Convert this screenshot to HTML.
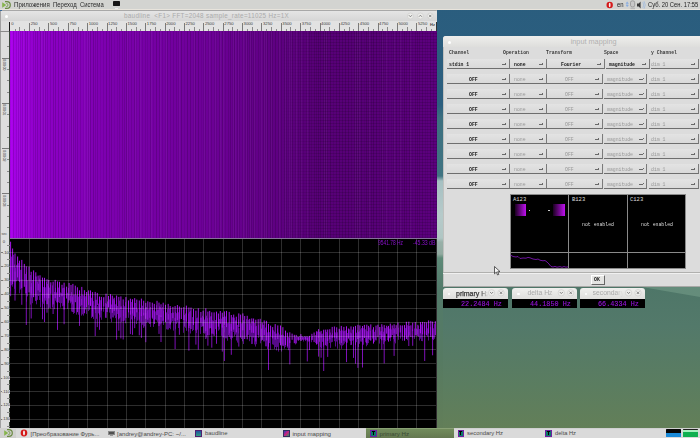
<!DOCTYPE html><html><head><meta charset="utf-8"><style>
*{margin:0;padding:0;box-sizing:border-box}
html,body{width:700px;height:438px;overflow:hidden;background:#2a5a7e;font-family:"Liberation Sans",sans-serif}
.a{position:absolute}
.t{position:absolute;white-space:nowrap;line-height:1}
.mono{font-family:"Liberation Mono",monospace}
</style></head><body><div class="a" style="left:0;top:0;width:700px;height:438px;background:linear-gradient(180deg,#2a5d7e 0px,#2c5f7f 105px,#3c7080 118px,#407482 176px,#a6c0c2 181px,#b6caca 215px,#b0c6c4 238px,#98b0a8 242px,#92aaa0 254px,#5e8a78 258px,#527a6a 290px,#567a62 360px,#627e58 428px)"></div>
<div class="a" style="left:443px;top:286px;width:257px;height:142px;background:linear-gradient(180deg,#4e7668 0px,#53796a 40px,#5b7d60 100px,#637f58 142px)"></div>
<svg class="a" style="left:0;top:0" width="700" height="438"><polygon points="636,286 700,286 700,297" fill="#68907f" fill-opacity="0.85"/></svg>
<div class="a" style="left:0;top:0;width:700px;height:9.6px;background:#d3d4d1;border-bottom:0.8px solid #e8e4dc"></div>
<svg class="a" style="left:0;top:0" width="12" height="10" viewBox="0 0 12 10"><path d="M5 1.6 H6.8 A3.5 3.4 0 0 1 6.8 8.4 H5" fill="none" stroke="#6a8a42" stroke-width="1.2"/><path d="M6.2 3.3 A1.8 1.7 0 0 1 6.2 6.7" fill="none" stroke="#7a9a52" stroke-width="0.9"/><path d="M2.2 2.3 L6.3 5 L2.2 7.7 Z" fill="#86b44c"/></svg>
<div class="t" style="left:13.6px;top:1.3px;font-size:7px;color:#2a2a2a;transform:scaleX(0.872);transform-origin:0 0">Приложения</div>
<div class="t" style="left:52.6px;top:1.3px;font-size:7px;color:#2a2a2a;transform:scaleX(0.849);transform-origin:0 0">Переход</div>
<div class="t" style="left:80.3px;top:1.3px;font-size:7px;color:#2a2a2a;transform:scaleX(0.84);transform-origin:0 0">Система</div>
<div class="a" style="left:112.9px;top:1.1px;width:7.2px;height:4.8px;background:#161616;border-radius:0.4px"></div><div class="a" style="left:115px;top:7.6px;width:3px;height:1.2px;background:#ececec"></div>
<svg class="a" style="left:0;top:0" width="700" height="12"><ellipse cx="609.7" cy="5" rx="3.2" ry="3.3" fill="#d41a1a"/><ellipse cx="609.7" cy="5" rx="0.9" ry="2.3" fill="#f4eaea"/></svg>
<div class="t" style="left:617px;top:1.3px;font-size:7px;color:#222;transform:scaleX(0.85);transform-origin:0 0">en</div>
<svg class="a" style="left:0;top:0" width="700" height="12"><path d="M627.2 1.8 L628.4 3.6 L626 3.6 Z M627.2 6.8 L628.4 5 L626 5 Z M627 3.4 V5.2" fill="#8aaee0" stroke="#8aaee0" stroke-width="0.5"/><rect x="630.5" y="0.8" width="4.2" height="6.2" rx="1.8" fill="#c8c8c8" stroke="#8a8a8a" stroke-width="0.7"/><rect x="630.4" y="7.6" width="4.6" height="1.6" fill="#b8b8b8"/><path d="M637 3.5 H638.8 L640.6 1.6 V8.4 L638.8 6.5 H637 Z" fill="#3a3a3a"/><path d="M642.8 2.2 Q644.8 5 642.8 7.8 M644 1.2 Q646.6 5 644 8.8" fill="none" stroke="#9ab8e0" stroke-width="0.7"/></svg>
<div class="t" style="left:648px;top:1.3px;font-size:7px;color:#222;transform:scaleX(0.831);transform-origin:0 0">Суб. 20 Сен. 17:55</div>
<div class="a" style="left:0;top:10px;width:437px;height:418px;background:#d8d8d6"></div>
<div class="a" style="left:0;top:10px;width:437px;height:11px;background:linear-gradient(#e6e6e6,#d6d6d6);border-top-right-radius:2px"></div>
<div class="a" style="left:0;top:9.6px;width:436.5px;height:0.8px;background:#a8a8a8;border-top-right-radius:1px"></div>
<div class="a" style="left:0;top:10px;width:1px;height:418px;background:#a4a4a4"></div>
<div class="a" style="left:0;top:9.5px;width:1.5px;height:1.5px;background:#3a6a9a"></div>
<div class="a" style="left:5px;top:15px;width:3px;height:3px;border-radius:50%;background:#fff"></div>
<div class="t" style="left:124px;top:12.6px;font-size:6.3px;letter-spacing:0.3px;color:#ababab">baudline &nbsp;&lt;F1&gt; FFT=2048 sample_rate=11025 Hz=1X</div>
<svg class="a" style="left:0;top:0" width="700" height="438"><circle cx="410.4" cy="16" r="3" fill="#ececea" stroke="#cfcfcd" stroke-width="0.7"/><path d="M408.9 15.2L410.4 16.8L411.9 15.2" stroke="#707070" stroke-width="0.8" fill="none"/><circle cx="420.4" cy="16" r="3" fill="#ececea" stroke="#cfcfcd" stroke-width="0.7"/><path d="M418.9 16.8L420.4 15.2L421.9 16.8" stroke="#707070" stroke-width="0.8" fill="none"/><circle cx="430.2" cy="16" r="3" fill="#ececea" stroke="#cfcfcd" stroke-width="0.7"/><path d="M429.0 14.8L431.4 17.2M431.4 14.8L429.0 17.2" stroke="#707070" stroke-width="0.8" fill="none"/></svg>
<div class="a" style="left:9px;top:21px;width:428px;height:10px;background:#e2e2e2"></div>
<div class="a" style="left:9px;top:21px;width:1px;height:10px;background:#111"></div>
<div class="a" style="left:436px;top:22px;width:1px;height:9px;background:#333"></div>
<div class="t" style="left:11.3px;top:22.3px;font-size:4.2px;color:#404040">0</div>
<div class="a" style="left:14.5px;top:28.6px;width:0.8px;height:2px;background:#8a8a8a"></div>
<div class="a" style="left:19.4px;top:27.1px;width:0.8px;height:3.5px;background:#8a8a8a"></div>
<div class="a" style="left:24.2px;top:28.6px;width:0.8px;height:2px;background:#8a8a8a"></div>
<div class="a" style="left:29.1px;top:22.8px;width:0.9px;height:8px;background:#7a7a7a"></div>
<div class="t" style="left:30.7px;top:22.3px;font-size:4.2px;color:#404040">250</div>
<div class="a" style="left:33.9px;top:28.6px;width:0.8px;height:2px;background:#8a8a8a"></div>
<div class="a" style="left:38.7px;top:27.1px;width:0.8px;height:3.5px;background:#8a8a8a"></div>
<div class="a" style="left:43.6px;top:28.6px;width:0.8px;height:2px;background:#8a8a8a"></div>
<div class="a" style="left:48.4px;top:22.8px;width:0.9px;height:8px;background:#7a7a7a"></div>
<div class="t" style="left:50.0px;top:22.3px;font-size:4.2px;color:#404040">500</div>
<div class="a" style="left:53.3px;top:28.6px;width:0.8px;height:2px;background:#8a8a8a"></div>
<div class="a" style="left:58.1px;top:27.1px;width:0.8px;height:3.5px;background:#8a8a8a"></div>
<div class="a" style="left:62.9px;top:28.6px;width:0.8px;height:2px;background:#8a8a8a"></div>
<div class="a" style="left:67.8px;top:22.8px;width:0.9px;height:8px;background:#7a7a7a"></div>
<div class="t" style="left:69.4px;top:22.3px;font-size:4.2px;color:#404040">750</div>
<div class="a" style="left:72.6px;top:28.6px;width:0.8px;height:2px;background:#8a8a8a"></div>
<div class="a" style="left:77.5px;top:27.1px;width:0.8px;height:3.5px;background:#8a8a8a"></div>
<div class="a" style="left:82.3px;top:28.6px;width:0.8px;height:2px;background:#8a8a8a"></div>
<div class="a" style="left:87.1px;top:22.8px;width:0.9px;height:8px;background:#7a7a7a"></div>
<div class="t" style="left:88.7px;top:22.3px;font-size:4.2px;color:#404040">1000</div>
<div class="a" style="left:92.0px;top:28.6px;width:0.8px;height:2px;background:#8a8a8a"></div>
<div class="a" style="left:96.8px;top:27.1px;width:0.8px;height:3.5px;background:#8a8a8a"></div>
<div class="a" style="left:101.7px;top:28.6px;width:0.8px;height:2px;background:#8a8a8a"></div>
<div class="a" style="left:106.5px;top:22.8px;width:0.9px;height:8px;background:#7a7a7a"></div>
<div class="t" style="left:108.1px;top:22.3px;font-size:4.2px;color:#404040">1250</div>
<div class="a" style="left:111.3px;top:28.6px;width:0.8px;height:2px;background:#8a8a8a"></div>
<div class="a" style="left:116.2px;top:27.1px;width:0.8px;height:3.5px;background:#8a8a8a"></div>
<div class="a" style="left:121.0px;top:28.6px;width:0.8px;height:2px;background:#8a8a8a"></div>
<div class="a" style="left:125.9px;top:22.8px;width:0.9px;height:8px;background:#7a7a7a"></div>
<div class="t" style="left:127.5px;top:22.3px;font-size:4.2px;color:#404040">1500</div>
<div class="a" style="left:130.7px;top:28.6px;width:0.8px;height:2px;background:#8a8a8a"></div>
<div class="a" style="left:135.5px;top:27.1px;width:0.8px;height:3.5px;background:#8a8a8a"></div>
<div class="a" style="left:140.4px;top:28.6px;width:0.8px;height:2px;background:#8a8a8a"></div>
<div class="a" style="left:145.2px;top:22.8px;width:0.9px;height:8px;background:#7a7a7a"></div>
<div class="t" style="left:146.8px;top:22.3px;font-size:4.2px;color:#404040">1750</div>
<div class="a" style="left:150.1px;top:28.6px;width:0.8px;height:2px;background:#8a8a8a"></div>
<div class="a" style="left:154.9px;top:27.1px;width:0.8px;height:3.5px;background:#8a8a8a"></div>
<div class="a" style="left:159.7px;top:28.6px;width:0.8px;height:2px;background:#8a8a8a"></div>
<div class="a" style="left:164.6px;top:22.8px;width:0.9px;height:8px;background:#7a7a7a"></div>
<div class="t" style="left:166.2px;top:22.3px;font-size:4.2px;color:#404040">2000</div>
<div class="a" style="left:169.4px;top:28.6px;width:0.8px;height:2px;background:#8a8a8a"></div>
<div class="a" style="left:174.3px;top:27.1px;width:0.8px;height:3.5px;background:#8a8a8a"></div>
<div class="a" style="left:179.1px;top:28.6px;width:0.8px;height:2px;background:#8a8a8a"></div>
<div class="a" style="left:183.9px;top:22.8px;width:0.9px;height:8px;background:#7a7a7a"></div>
<div class="t" style="left:185.5px;top:22.3px;font-size:4.2px;color:#404040">2250</div>
<div class="a" style="left:188.8px;top:28.6px;width:0.8px;height:2px;background:#8a8a8a"></div>
<div class="a" style="left:193.6px;top:27.1px;width:0.8px;height:3.5px;background:#8a8a8a"></div>
<div class="a" style="left:198.5px;top:28.6px;width:0.8px;height:2px;background:#8a8a8a"></div>
<div class="a" style="left:203.3px;top:22.8px;width:0.9px;height:8px;background:#7a7a7a"></div>
<div class="t" style="left:204.9px;top:22.3px;font-size:4.2px;color:#404040">2500</div>
<div class="a" style="left:208.1px;top:28.6px;width:0.8px;height:2px;background:#8a8a8a"></div>
<div class="a" style="left:213.0px;top:27.1px;width:0.8px;height:3.5px;background:#8a8a8a"></div>
<div class="a" style="left:217.8px;top:28.6px;width:0.8px;height:2px;background:#8a8a8a"></div>
<div class="a" style="left:222.7px;top:22.8px;width:0.9px;height:8px;background:#7a7a7a"></div>
<div class="t" style="left:224.3px;top:22.3px;font-size:4.2px;color:#404040">2750</div>
<div class="a" style="left:227.5px;top:28.6px;width:0.8px;height:2px;background:#8a8a8a"></div>
<div class="a" style="left:232.3px;top:27.1px;width:0.8px;height:3.5px;background:#8a8a8a"></div>
<div class="a" style="left:237.2px;top:28.6px;width:0.8px;height:2px;background:#8a8a8a"></div>
<div class="a" style="left:242.0px;top:22.8px;width:0.9px;height:8px;background:#7a7a7a"></div>
<div class="t" style="left:243.6px;top:22.3px;font-size:4.2px;color:#404040">3000</div>
<div class="a" style="left:246.9px;top:28.6px;width:0.8px;height:2px;background:#8a8a8a"></div>
<div class="a" style="left:251.7px;top:27.1px;width:0.8px;height:3.5px;background:#8a8a8a"></div>
<div class="a" style="left:256.5px;top:28.6px;width:0.8px;height:2px;background:#8a8a8a"></div>
<div class="a" style="left:261.4px;top:22.8px;width:0.9px;height:8px;background:#7a7a7a"></div>
<div class="t" style="left:263.0px;top:22.3px;font-size:4.2px;color:#404040">3250</div>
<div class="a" style="left:266.2px;top:28.6px;width:0.8px;height:2px;background:#8a8a8a"></div>
<div class="a" style="left:271.1px;top:27.1px;width:0.8px;height:3.5px;background:#8a8a8a"></div>
<div class="a" style="left:275.9px;top:28.6px;width:0.8px;height:2px;background:#8a8a8a"></div>
<div class="a" style="left:280.7px;top:22.8px;width:0.9px;height:8px;background:#7a7a7a"></div>
<div class="t" style="left:282.3px;top:22.3px;font-size:4.2px;color:#404040">3500</div>
<div class="a" style="left:285.6px;top:28.6px;width:0.8px;height:2px;background:#8a8a8a"></div>
<div class="a" style="left:290.4px;top:27.1px;width:0.8px;height:3.5px;background:#8a8a8a"></div>
<div class="a" style="left:295.3px;top:28.6px;width:0.8px;height:2px;background:#8a8a8a"></div>
<div class="a" style="left:300.1px;top:22.8px;width:0.9px;height:8px;background:#7a7a7a"></div>
<div class="t" style="left:301.7px;top:22.3px;font-size:4.2px;color:#404040">3750</div>
<div class="a" style="left:304.9px;top:28.6px;width:0.8px;height:2px;background:#8a8a8a"></div>
<div class="a" style="left:309.8px;top:27.1px;width:0.8px;height:3.5px;background:#8a8a8a"></div>
<div class="a" style="left:314.6px;top:28.6px;width:0.8px;height:2px;background:#8a8a8a"></div>
<div class="a" style="left:319.5px;top:22.8px;width:0.9px;height:8px;background:#7a7a7a"></div>
<div class="t" style="left:321.1px;top:22.3px;font-size:4.2px;color:#404040">4000</div>
<div class="a" style="left:324.3px;top:28.6px;width:0.8px;height:2px;background:#8a8a8a"></div>
<div class="a" style="left:329.1px;top:27.1px;width:0.8px;height:3.5px;background:#8a8a8a"></div>
<div class="a" style="left:334.0px;top:28.6px;width:0.8px;height:2px;background:#8a8a8a"></div>
<div class="a" style="left:338.8px;top:22.8px;width:0.9px;height:8px;background:#7a7a7a"></div>
<div class="t" style="left:340.4px;top:22.3px;font-size:4.2px;color:#404040">4250</div>
<div class="a" style="left:343.7px;top:28.6px;width:0.8px;height:2px;background:#8a8a8a"></div>
<div class="a" style="left:348.5px;top:27.1px;width:0.8px;height:3.5px;background:#8a8a8a"></div>
<div class="a" style="left:353.3px;top:28.6px;width:0.8px;height:2px;background:#8a8a8a"></div>
<div class="a" style="left:358.2px;top:22.8px;width:0.9px;height:8px;background:#7a7a7a"></div>
<div class="t" style="left:359.8px;top:22.3px;font-size:4.2px;color:#404040">4500</div>
<div class="a" style="left:363.0px;top:28.6px;width:0.8px;height:2px;background:#8a8a8a"></div>
<div class="a" style="left:367.9px;top:27.1px;width:0.8px;height:3.5px;background:#8a8a8a"></div>
<div class="a" style="left:372.7px;top:28.6px;width:0.8px;height:2px;background:#8a8a8a"></div>
<div class="a" style="left:377.5px;top:22.8px;width:0.9px;height:8px;background:#7a7a7a"></div>
<div class="t" style="left:379.1px;top:22.3px;font-size:4.2px;color:#404040">4750</div>
<div class="a" style="left:382.4px;top:28.6px;width:0.8px;height:2px;background:#8a8a8a"></div>
<div class="a" style="left:387.2px;top:27.1px;width:0.8px;height:3.5px;background:#8a8a8a"></div>
<div class="a" style="left:392.1px;top:28.6px;width:0.8px;height:2px;background:#8a8a8a"></div>
<div class="a" style="left:396.9px;top:22.8px;width:0.9px;height:8px;background:#7a7a7a"></div>
<div class="t" style="left:398.5px;top:22.3px;font-size:4.2px;color:#404040">5000</div>
<div class="a" style="left:401.7px;top:28.6px;width:0.8px;height:2px;background:#8a8a8a"></div>
<div class="a" style="left:406.6px;top:27.1px;width:0.8px;height:3.5px;background:#8a8a8a"></div>
<div class="a" style="left:411.4px;top:28.6px;width:0.8px;height:2px;background:#8a8a8a"></div>
<div class="a" style="left:416.3px;top:22.8px;width:0.9px;height:8px;background:#7a7a7a"></div>
<div class="t" style="left:417.9px;top:22.3px;font-size:4.2px;color:#404040">5250</div>
<div class="a" style="left:421.1px;top:28.6px;width:0.8px;height:2px;background:#8a8a8a"></div>
<div class="a" style="left:425.9px;top:27.1px;width:0.8px;height:3.5px;background:#8a8a8a"></div>
<div class="a" style="left:430.8px;top:28.6px;width:0.8px;height:2px;background:#8a8a8a"></div>
<div class="t" style="left:430px;top:23px;font-size:4px;font-weight:bold;color:#3c3c3c">Hz</div>
<div class="a" style="left:0;top:21px;width:9.5px;height:407px;background:#dedede;border-left:1px solid #a0a0a0"></div>
<div class="a" style="left:0;top:30.5px;width:10px;height:0.8px;background:#8a8a8a"></div>
<div class="a" style="left:9px;top:21.5px;width:1px;height:9.5px;background:#181818"></div>
<div class="a" style="left:6.5px;top:46.4px;width:3px;height:0.8px;background:#8a8a8a"></div>
<div class="a" style="left:1.5px;top:57.7px;width:8px;height:0.8px;background:#7a7a7a"></div>
<div class="t" style="left:1.6px;top:59.2px;font-size:4px;color:#3a3a3a;writing-mode:vertical-rl;letter-spacing:-0.3px">0:00:00</div>
<div class="a" style="left:6.5px;top:69.0px;width:3px;height:0.8px;background:#8a8a8a"></div>
<div class="a" style="left:6.5px;top:80.3px;width:3px;height:0.8px;background:#8a8a8a"></div>
<div class="a" style="left:6.5px;top:91.6px;width:3px;height:0.8px;background:#8a8a8a"></div>
<div class="a" style="left:1.5px;top:102.9px;width:8px;height:0.8px;background:#7a7a7a"></div>
<div class="t" style="left:1.6px;top:104.4px;font-size:4px;color:#3a3a3a;writing-mode:vertical-rl;letter-spacing:-0.3px">0:00:01</div>
<div class="a" style="left:6.5px;top:114.2px;width:3px;height:0.8px;background:#8a8a8a"></div>
<div class="a" style="left:6.5px;top:125.5px;width:3px;height:0.8px;background:#8a8a8a"></div>
<div class="a" style="left:6.5px;top:136.8px;width:3px;height:0.8px;background:#8a8a8a"></div>
<div class="a" style="left:1.5px;top:148.1px;width:8px;height:0.8px;background:#7a7a7a"></div>
<div class="t" style="left:1.6px;top:149.6px;font-size:4px;color:#3a3a3a;writing-mode:vertical-rl;letter-spacing:-0.3px">0:00:02</div>
<div class="a" style="left:6.5px;top:159.4px;width:3px;height:0.8px;background:#8a8a8a"></div>
<div class="a" style="left:6.5px;top:170.7px;width:3px;height:0.8px;background:#8a8a8a"></div>
<div class="a" style="left:6.5px;top:182.0px;width:3px;height:0.8px;background:#8a8a8a"></div>
<div class="a" style="left:1.5px;top:193.3px;width:8px;height:0.8px;background:#7a7a7a"></div>
<div class="t" style="left:1.6px;top:194.8px;font-size:4px;color:#3a3a3a;writing-mode:vertical-rl;letter-spacing:-0.3px">0:00:03</div>
<div class="a" style="left:6.5px;top:204.6px;width:3px;height:0.8px;background:#8a8a8a"></div>
<div class="a" style="left:6.5px;top:215.9px;width:3px;height:0.8px;background:#8a8a8a"></div>
<div class="a" style="left:6.5px;top:227.2px;width:3px;height:0.8px;background:#8a8a8a"></div>
<div class="t" style="left:1.5px;top:232.5px;font-size:3.5px;color:#444">sec</div>
<div class="a" style="left:10px;top:31px;width:427px;height:207px;background:linear-gradient(90deg,#b004f2 0px,#a000e0 6px,#8e00c8 30px,#7c00ae 100px,#6c0096 200px,#580078 300px,#570077 350px,#5c007e 427px)"></div>
<svg class="a" style="left:10px;top:31px" width="427" height="207"><rect x="0.0" y="0" width="1" height="207" fill="#000" fill-opacity="0.08"/><rect x="3.0" y="0" width="1" height="207" fill="#000" fill-opacity="0.15"/><rect x="6.0" y="0" width="1" height="207" fill="#000" fill-opacity="0.07"/><rect x="7.0" y="0" width="1" height="207" fill="#fff" fill-opacity="0.04"/><rect x="8.0" y="0" width="1" height="207" fill="#000" fill-opacity="0.09"/><rect x="9.0" y="0" width="1" height="207" fill="#fff" fill-opacity="0.04"/><rect x="10.0" y="0" width="1" height="207" fill="#000" fill-opacity="0.11"/><rect x="12.0" y="0" width="1" height="207" fill="#000" fill-opacity="0.12"/><rect x="13.0" y="0" width="1" height="207" fill="#fff" fill-opacity="0.04"/><rect x="15.0" y="0" width="1" height="207" fill="#000" fill-opacity="0.15"/><rect x="17.0" y="0" width="1" height="207" fill="#000" fill-opacity="0.13"/><rect x="18.0" y="0" width="1" height="207" fill="#fff" fill-opacity="0.04"/><rect x="20.0" y="0" width="1" height="207" fill="#000" fill-opacity="0.06"/><rect x="23.0" y="0" width="1" height="207" fill="#000" fill-opacity="0.11"/><rect x="25.0" y="0" width="1" height="207" fill="#000" fill-opacity="0.13"/><rect x="27.0" y="0" width="1" height="207" fill="#000" fill-opacity="0.13"/><rect x="30.0" y="0" width="1" height="207" fill="#000" fill-opacity="0.15"/><rect x="31.0" y="0" width="1" height="207" fill="#fff" fill-opacity="0.04"/><rect x="33.0" y="0" width="1" height="207" fill="#000" fill-opacity="0.11"/><rect x="34.0" y="0" width="1" height="207" fill="#fff" fill-opacity="0.04"/><rect x="35.0" y="0" width="1" height="207" fill="#000" fill-opacity="0.14"/><rect x="37.0" y="0" width="1" height="207" fill="#000" fill-opacity="0.11"/><rect x="40.0" y="0" width="1" height="207" fill="#000" fill-opacity="0.11"/><rect x="43.0" y="0" width="1" height="207" fill="#000" fill-opacity="0.15"/><rect x="45.0" y="0" width="1" height="207" fill="#000" fill-opacity="0.15"/><rect x="48.0" y="0" width="1" height="207" fill="#000" fill-opacity="0.13"/><rect x="51.0" y="0" width="1" height="207" fill="#000" fill-opacity="0.15"/><rect x="54.0" y="0" width="1" height="207" fill="#000" fill-opacity="0.12"/><rect x="57.0" y="0" width="1" height="207" fill="#000" fill-opacity="0.09"/><rect x="58.0" y="0" width="1" height="207" fill="#fff" fill-opacity="0.04"/><rect x="59.0" y="0" width="1" height="207" fill="#000" fill-opacity="0.07"/><rect x="61.0" y="0" width="1" height="207" fill="#000" fill-opacity="0.15"/><rect x="62.0" y="0" width="1" height="207" fill="#fff" fill-opacity="0.04"/><rect x="63.0" y="0" width="1" height="207" fill="#000" fill-opacity="0.14"/><rect x="65.0" y="0" width="1" height="207" fill="#000" fill-opacity="0.12"/><rect x="67.0" y="0" width="1" height="207" fill="#000" fill-opacity="0.13"/><rect x="70.0" y="0" width="1" height="207" fill="#000" fill-opacity="0.11"/><rect x="73.0" y="0" width="1" height="207" fill="#000" fill-opacity="0.06"/><rect x="74.0" y="0" width="1" height="207" fill="#fff" fill-opacity="0.04"/><rect x="76.0" y="0" width="1" height="207" fill="#000" fill-opacity="0.06"/><rect x="77.0" y="0" width="1" height="207" fill="#fff" fill-opacity="0.04"/><rect x="78.0" y="0" width="1" height="207" fill="#000" fill-opacity="0.09"/><rect x="79.0" y="0" width="1" height="207" fill="#fff" fill-opacity="0.04"/><rect x="80.0" y="0" width="1" height="207" fill="#000" fill-opacity="0.16"/><rect x="83.0" y="0" width="1" height="207" fill="#000" fill-opacity="0.16"/><rect x="85.0" y="0" width="1" height="207" fill="#000" fill-opacity="0.10"/><rect x="87.0" y="0" width="1" height="207" fill="#000" fill-opacity="0.12"/><rect x="90.0" y="0" width="1" height="207" fill="#000" fill-opacity="0.07"/><rect x="93.0" y="0" width="1" height="207" fill="#000" fill-opacity="0.09"/><rect x="96.0" y="0" width="1" height="207" fill="#000" fill-opacity="0.15"/><rect x="99.0" y="0" width="1" height="207" fill="#000" fill-opacity="0.11"/><rect x="101.0" y="0" width="1" height="207" fill="#000" fill-opacity="0.14"/><rect x="104.0" y="0" width="1" height="207" fill="#000" fill-opacity="0.06"/><rect x="107.0" y="0" width="1" height="207" fill="#000" fill-opacity="0.07"/><rect x="109.0" y="0" width="1" height="207" fill="#000" fill-opacity="0.10"/><rect x="112.0" y="0" width="1" height="207" fill="#000" fill-opacity="0.13"/><rect x="114.0" y="0" width="1" height="207" fill="#000" fill-opacity="0.12"/><rect x="116.0" y="0" width="1" height="207" fill="#000" fill-opacity="0.16"/><rect x="117.0" y="0" width="1" height="207" fill="#fff" fill-opacity="0.04"/><rect x="118.0" y="0" width="1" height="207" fill="#000" fill-opacity="0.09"/><rect x="121.0" y="0" width="1" height="207" fill="#000" fill-opacity="0.10"/><rect x="124.0" y="0" width="1" height="207" fill="#000" fill-opacity="0.14"/><rect x="125.0" y="0" width="1" height="207" fill="#fff" fill-opacity="0.04"/><rect x="126.0" y="0" width="1" height="207" fill="#000" fill-opacity="0.07"/><rect x="129.0" y="0" width="1" height="207" fill="#000" fill-opacity="0.13"/><rect x="130.0" y="0" width="1" height="207" fill="#fff" fill-opacity="0.04"/><rect x="132.0" y="0" width="1" height="207" fill="#000" fill-opacity="0.08"/><rect x="135.0" y="0" width="1" height="207" fill="#000" fill-opacity="0.09"/><rect x="137.0" y="0" width="1" height="207" fill="#000" fill-opacity="0.07"/><rect x="140.0" y="0" width="1" height="207" fill="#000" fill-opacity="0.13"/><rect x="141.0" y="0" width="1" height="207" fill="#fff" fill-opacity="0.04"/><rect x="143.0" y="0" width="1" height="207" fill="#000" fill-opacity="0.07"/><rect x="146.0" y="0" width="1" height="207" fill="#000" fill-opacity="0.15"/><rect x="149.0" y="0" width="1" height="207" fill="#000" fill-opacity="0.14"/><rect x="150.0" y="0" width="1" height="207" fill="#fff" fill-opacity="0.04"/><rect x="152.0" y="0" width="1" height="207" fill="#000" fill-opacity="0.09"/><rect x="155.0" y="0" width="1" height="207" fill="#000" fill-opacity="0.08"/><rect x="156.0" y="0" width="1" height="207" fill="#fff" fill-opacity="0.04"/><rect x="157.0" y="0" width="1" height="207" fill="#000" fill-opacity="0.14"/><rect x="160.0" y="0" width="1" height="207" fill="#000" fill-opacity="0.10"/><rect x="163.0" y="0" width="1" height="207" fill="#000" fill-opacity="0.11"/><rect x="166.0" y="0" width="1" height="207" fill="#000" fill-opacity="0.10"/><rect x="168.0" y="0" width="1" height="207" fill="#000" fill-opacity="0.08"/><rect x="169.0" y="0" width="1" height="207" fill="#fff" fill-opacity="0.04"/><rect x="171.0" y="0" width="1" height="207" fill="#000" fill-opacity="0.16"/><rect x="174.0" y="0" width="1" height="207" fill="#000" fill-opacity="0.06"/><rect x="177.0" y="0" width="1" height="207" fill="#000" fill-opacity="0.16"/><rect x="180.0" y="0" width="1" height="207" fill="#000" fill-opacity="0.15"/><rect x="183.0" y="0" width="1" height="207" fill="#000" fill-opacity="0.07"/><rect x="184.0" y="0" width="1" height="207" fill="#fff" fill-opacity="0.04"/><rect x="185.0" y="0" width="1" height="207" fill="#000" fill-opacity="0.15"/><rect x="188.0" y="0" width="1" height="207" fill="#000" fill-opacity="0.15"/><rect x="191.0" y="0" width="1" height="207" fill="#000" fill-opacity="0.06"/><rect x="193.0" y="0" width="1" height="207" fill="#000" fill-opacity="0.08"/><rect x="194.0" y="0" width="1" height="207" fill="#fff" fill-opacity="0.04"/><rect x="195.0" y="0" width="1" height="207" fill="#000" fill-opacity="0.11"/><rect x="198.0" y="0" width="1" height="207" fill="#000" fill-opacity="0.07"/><rect x="199.0" y="0" width="1" height="207" fill="#fff" fill-opacity="0.04"/><rect x="201.0" y="0" width="1" height="207" fill="#000" fill-opacity="0.11"/><rect x="204.0" y="0" width="1" height="207" fill="#000" fill-opacity="0.08"/><rect x="205.0" y="0" width="1" height="207" fill="#fff" fill-opacity="0.04"/><rect x="206.0" y="0" width="1" height="207" fill="#000" fill-opacity="0.08"/><rect x="209.0" y="0" width="1" height="207" fill="#000" fill-opacity="0.14"/><rect x="210.0" y="0" width="1" height="207" fill="#fff" fill-opacity="0.04"/><rect x="212.0" y="0" width="1" height="207" fill="#000" fill-opacity="0.15"/><rect x="213.0" y="0" width="1" height="207" fill="#fff" fill-opacity="0.04"/><rect x="215.0" y="0" width="1" height="207" fill="#000" fill-opacity="0.08"/><rect x="218.0" y="0" width="1" height="207" fill="#000" fill-opacity="0.10"/><rect x="220.0" y="0" width="1" height="207" fill="#000" fill-opacity="0.15"/><rect x="222.0" y="0" width="1" height="207" fill="#000" fill-opacity="0.07"/><rect x="223.0" y="0" width="1" height="207" fill="#fff" fill-opacity="0.04"/><rect x="224.0" y="0" width="1" height="207" fill="#000" fill-opacity="0.15"/><rect x="225.0" y="0" width="1" height="207" fill="#fff" fill-opacity="0.04"/><rect x="227.0" y="0" width="1" height="207" fill="#000" fill-opacity="0.11"/><rect x="228.0" y="0" width="1" height="207" fill="#fff" fill-opacity="0.04"/><rect x="229.0" y="0" width="1" height="207" fill="#000" fill-opacity="0.10"/><rect x="232.0" y="0" width="1" height="207" fill="#000" fill-opacity="0.09"/><rect x="233.0" y="0" width="1" height="207" fill="#fff" fill-opacity="0.04"/><rect x="235.0" y="0" width="1" height="207" fill="#000" fill-opacity="0.10"/><rect x="236.0" y="0" width="1" height="207" fill="#fff" fill-opacity="0.04"/><rect x="237.0" y="0" width="1" height="207" fill="#000" fill-opacity="0.13"/><rect x="239.0" y="0" width="1" height="207" fill="#000" fill-opacity="0.12"/><rect x="240.0" y="0" width="1" height="207" fill="#fff" fill-opacity="0.04"/><rect x="241.0" y="0" width="1" height="207" fill="#000" fill-opacity="0.12"/><rect x="243.0" y="0" width="1" height="207" fill="#000" fill-opacity="0.12"/><rect x="244.0" y="0" width="1" height="207" fill="#fff" fill-opacity="0.04"/><rect x="245.0" y="0" width="1" height="207" fill="#000" fill-opacity="0.07"/><rect x="248.0" y="0" width="1" height="207" fill="#000" fill-opacity="0.10"/><rect x="250.0" y="0" width="1" height="207" fill="#000" fill-opacity="0.06"/><rect x="251.0" y="0" width="1" height="207" fill="#fff" fill-opacity="0.04"/><rect x="253.0" y="0" width="1" height="207" fill="#000" fill-opacity="0.13"/><rect x="254.0" y="0" width="1" height="207" fill="#fff" fill-opacity="0.04"/><rect x="255.0" y="0" width="1" height="207" fill="#000" fill-opacity="0.08"/><rect x="256.0" y="0" width="1" height="207" fill="#fff" fill-opacity="0.04"/><rect x="257.0" y="0" width="1" height="207" fill="#000" fill-opacity="0.15"/><rect x="260.0" y="0" width="1" height="207" fill="#000" fill-opacity="0.14"/><rect x="261.0" y="0" width="1" height="207" fill="#fff" fill-opacity="0.04"/><rect x="262.0" y="0" width="1" height="207" fill="#000" fill-opacity="0.13"/><rect x="265.0" y="0" width="1" height="207" fill="#000" fill-opacity="0.14"/><rect x="268.0" y="0" width="1" height="207" fill="#000" fill-opacity="0.12"/><rect x="269.0" y="0" width="1" height="207" fill="#fff" fill-opacity="0.04"/><rect x="271.0" y="0" width="1" height="207" fill="#000" fill-opacity="0.13"/><rect x="274.0" y="0" width="1" height="207" fill="#000" fill-opacity="0.14"/><rect x="275.0" y="0" width="1" height="207" fill="#fff" fill-opacity="0.04"/><rect x="276.0" y="0" width="1" height="207" fill="#000" fill-opacity="0.12"/><rect x="278.0" y="0" width="1" height="207" fill="#000" fill-opacity="0.08"/><rect x="279.0" y="0" width="1" height="207" fill="#fff" fill-opacity="0.04"/><rect x="280.0" y="0" width="1" height="207" fill="#000" fill-opacity="0.06"/><rect x="281.0" y="0" width="1" height="207" fill="#fff" fill-opacity="0.04"/><rect x="282.0" y="0" width="1" height="207" fill="#000" fill-opacity="0.14"/><rect x="285.0" y="0" width="1" height="207" fill="#000" fill-opacity="0.09"/><rect x="286.0" y="0" width="1" height="207" fill="#fff" fill-opacity="0.04"/><rect x="288.0" y="0" width="1" height="207" fill="#000" fill-opacity="0.11"/><rect x="290.0" y="0" width="1" height="207" fill="#000" fill-opacity="0.12"/><rect x="291.0" y="0" width="1" height="207" fill="#fff" fill-opacity="0.04"/><rect x="293.0" y="0" width="1" height="207" fill="#000" fill-opacity="0.07"/><rect x="296.0" y="0" width="1" height="207" fill="#000" fill-opacity="0.08"/><rect x="297.0" y="0" width="1" height="207" fill="#fff" fill-opacity="0.04"/><rect x="299.0" y="0" width="1" height="207" fill="#000" fill-opacity="0.12"/><rect x="301.0" y="0" width="1" height="207" fill="#000" fill-opacity="0.09"/><rect x="304.0" y="0" width="1" height="207" fill="#000" fill-opacity="0.12"/><rect x="306.0" y="0" width="1" height="207" fill="#000" fill-opacity="0.11"/><rect x="308.0" y="0" width="1" height="207" fill="#000" fill-opacity="0.14"/><rect x="310.0" y="0" width="1" height="207" fill="#000" fill-opacity="0.13"/><rect x="313.0" y="0" width="1" height="207" fill="#000" fill-opacity="0.13"/><rect x="314.0" y="0" width="1" height="207" fill="#fff" fill-opacity="0.04"/><rect x="315.0" y="0" width="1" height="207" fill="#000" fill-opacity="0.15"/><rect x="316.0" y="0" width="1" height="207" fill="#fff" fill-opacity="0.04"/><rect x="317.0" y="0" width="1" height="207" fill="#000" fill-opacity="0.11"/><rect x="320.0" y="0" width="1" height="207" fill="#000" fill-opacity="0.16"/><rect x="323.0" y="0" width="1" height="207" fill="#000" fill-opacity="0.07"/><rect x="326.0" y="0" width="1" height="207" fill="#000" fill-opacity="0.12"/><rect x="329.0" y="0" width="1" height="207" fill="#000" fill-opacity="0.15"/><rect x="332.0" y="0" width="1" height="207" fill="#000" fill-opacity="0.13"/><rect x="335.0" y="0" width="1" height="207" fill="#000" fill-opacity="0.15"/><rect x="338.0" y="0" width="1" height="207" fill="#000" fill-opacity="0.15"/><rect x="341.0" y="0" width="1" height="207" fill="#000" fill-opacity="0.11"/><rect x="344.0" y="0" width="1" height="207" fill="#000" fill-opacity="0.12"/><rect x="345.0" y="0" width="1" height="207" fill="#fff" fill-opacity="0.04"/><rect x="346.0" y="0" width="1" height="207" fill="#000" fill-opacity="0.14"/><rect x="347.0" y="0" width="1" height="207" fill="#fff" fill-opacity="0.04"/><rect x="348.0" y="0" width="1" height="207" fill="#000" fill-opacity="0.13"/><rect x="349.0" y="0" width="1" height="207" fill="#fff" fill-opacity="0.04"/><rect x="351.0" y="0" width="1" height="207" fill="#000" fill-opacity="0.14"/><rect x="354.0" y="0" width="1" height="207" fill="#000" fill-opacity="0.06"/><rect x="356.0" y="0" width="1" height="207" fill="#000" fill-opacity="0.15"/><rect x="358.0" y="0" width="1" height="207" fill="#000" fill-opacity="0.11"/><rect x="359.0" y="0" width="1" height="207" fill="#fff" fill-opacity="0.04"/><rect x="361.0" y="0" width="1" height="207" fill="#000" fill-opacity="0.12"/><rect x="363.0" y="0" width="1" height="207" fill="#000" fill-opacity="0.16"/><rect x="366.0" y="0" width="1" height="207" fill="#000" fill-opacity="0.15"/><rect x="369.0" y="0" width="1" height="207" fill="#000" fill-opacity="0.08"/><rect x="371.0" y="0" width="1" height="207" fill="#000" fill-opacity="0.15"/><rect x="372.0" y="0" width="1" height="207" fill="#fff" fill-opacity="0.04"/><rect x="373.0" y="0" width="1" height="207" fill="#000" fill-opacity="0.09"/><rect x="375.0" y="0" width="1" height="207" fill="#000" fill-opacity="0.07"/><rect x="376.0" y="0" width="1" height="207" fill="#fff" fill-opacity="0.04"/><rect x="378.0" y="0" width="1" height="207" fill="#000" fill-opacity="0.06"/><rect x="381.0" y="0" width="1" height="207" fill="#000" fill-opacity="0.06"/><rect x="383.0" y="0" width="1" height="207" fill="#000" fill-opacity="0.10"/><rect x="384.0" y="0" width="1" height="207" fill="#fff" fill-opacity="0.04"/><rect x="386.0" y="0" width="1" height="207" fill="#000" fill-opacity="0.13"/><rect x="389.0" y="0" width="1" height="207" fill="#000" fill-opacity="0.11"/><rect x="390.0" y="0" width="1" height="207" fill="#fff" fill-opacity="0.04"/><rect x="392.0" y="0" width="1" height="207" fill="#000" fill-opacity="0.07"/><rect x="394.0" y="0" width="1" height="207" fill="#000" fill-opacity="0.15"/><rect x="396.0" y="0" width="1" height="207" fill="#000" fill-opacity="0.11"/><rect x="399.0" y="0" width="1" height="207" fill="#000" fill-opacity="0.14"/><rect x="400.0" y="0" width="1" height="207" fill="#fff" fill-opacity="0.04"/><rect x="402.0" y="0" width="1" height="207" fill="#000" fill-opacity="0.07"/><rect x="405.0" y="0" width="1" height="207" fill="#000" fill-opacity="0.13"/><rect x="407.0" y="0" width="1" height="207" fill="#000" fill-opacity="0.13"/><rect x="409.0" y="0" width="1" height="207" fill="#000" fill-opacity="0.13"/><rect x="412.0" y="0" width="1" height="207" fill="#000" fill-opacity="0.13"/><rect x="415.0" y="0" width="1" height="207" fill="#000" fill-opacity="0.08"/><rect x="417.0" y="0" width="1" height="207" fill="#000" fill-opacity="0.07"/><rect x="420.0" y="0" width="1" height="207" fill="#000" fill-opacity="0.15"/><rect x="423.0" y="0" width="1" height="207" fill="#000" fill-opacity="0.10"/><rect x="426.0" y="0" width="1" height="207" fill="#000" fill-opacity="0.11"/></svg>
<div class="a" style="left:280px;top:31px;width:157px;height:207px;background:repeating-linear-gradient(180deg,rgba(0,0,0,0) 0px,rgba(0,0,0,0) 2px,rgba(0,0,0,0.12) 2px,rgba(0,0,0,0.12) 3px);-webkit-mask-image:linear-gradient(90deg,transparent,#000 40px)"></div>
<div class="a" style="left:9px;top:31px;width:1px;height:397px;background:#3a463a"></div>
<div class="a" style="left:10px;top:238px;width:427px;height:1px;background:#86709a"></div>
<div class="a" style="left:10px;top:239px;width:427px;height:189px;background:#000"></div>
<svg class="a" style="left:10px;top:239px" width="427" height="189" viewBox="0 0 427 189"><path d="M0.5 16.0V52.2M1.5 17.6V46.3M2.5 19.5V47.7M3.5 15.8V42.6M4.5 25.6V49.8M5.5 28.7V54.7M6.5 25.8V42.3M7.5 26.0V41.5M8.5 24.2V41.8M9.5 27.5V54.3M10.5 30.9V50.5M11.5 30.7V49.1M15.5 34.9V54.6M16.5 32.9V62.7M17.5 41.2V57.4M20.5 36.1V65.6M21.5 44.1V58.6M22.5 41.0V64.2M23.5 36.2V58.2M25.5 37.5V57.6M26.5 37.5V65.3M27.5 42.6V60.9M28.5 44.7V57.0M29.5 39.6V61.0M30.5 41.5V68.3M32.5 47.9V59.3M33.5 48.1V64.8M34.5 49.7V59.9M35.5 48.3V61.6M36.5 43.0V59.1M37.5 45.0V65.3M38.5 47.2V69.7M39.5 48.6V68.8M40.5 45.7V69.5M42.5 46.4V68.1M44.5 52.9V70.2M45.5 48.9V61.7M46.5 53.4V63.4M47.5 48.1V70.2M48.5 48.6V63.2M49.5 47.1V64.0M50.5 53.5V68.6M51.5 54.2V64.2M52.5 49.3V67.2M53.5 48.8V66.5M54.5 48.7V66.7M57.5 53.8V69.9M58.5 48.9V63.8M60.5 56.7V64.3M61.5 53.1V72.5M62.5 57.5V65.4M63.5 55.7V74.9M64.5 55.7V74.0M66.5 56.2V75.6M68.5 57.6V75.7M69.5 56.6V70.6M70.5 56.7V67.5M71.5 60.0V76.6M72.5 55.6V75.3M73.5 56.4V76.6M74.5 59.0V68.1M75.5 57.3V70.5M76.5 57.7V74.9M78.5 54.6V72.1M79.5 56.4V70.9M81.5 58.8V79.1M82.5 60.7V72.0M83.5 62.1V79.9M85.5 61.0V74.0M86.5 60.7V79.8M88.5 64.6V74.4M89.5 61.3V74.6M90.5 61.2V78.5M91.5 60.6V80.8M93.5 59.1V72.7M95.5 64.0V78.5M96.5 64.7V72.9M97.5 62.4V73.1M99.5 60.4V73.6M100.5 62.8V79.7M101.5 65.5V83.2M102.5 61.3V78.4M103.5 60.1V78.5M104.5 61.4V76.5M105.5 65.3V79.2M106.5 65.8V78.0M107.5 67.0V75.0M109.5 61.7V79.0M110.5 67.5V78.4M111.5 67.4V82.8M113.5 66.0V77.0M114.5 67.3V81.6M115.5 63.2V84.3M118.5 67.7V78.8M121.5 63.0V80.4M122.5 68.0V81.0M123.5 68.5V76.8M124.5 64.1V79.7M125.5 64.0V77.9M126.5 68.3V85.0M127.5 70.0V81.6M129.5 65.1V82.2M130.5 68.8V83.5M131.5 69.8V82.8M132.5 66.7V85.8M134.5 70.2V87.3M135.5 68.4V79.7M136.5 68.1V83.9M137.5 71.5V83.1M138.5 70.4V83.7M139.5 69.8V78.8M140.5 68.0V87.9M142.5 68.7V80.0M143.5 71.3V87.9M144.5 68.0V80.9M145.5 72.4V80.5M146.5 66.2V81.3M147.5 71.1V82.8M148.5 70.7V80.8M149.5 67.4V85.0M150.5 68.1V85.4M151.5 69.5V84.4M152.5 68.2V82.5M153.5 71.7V85.9M155.5 73.6V83.3M156.5 73.4V90.3M157.5 70.1V90.6M158.5 75.1V90.5M159.5 69.9V89.0M160.5 69.0V90.3M161.5 74.1V83.3M162.5 73.5V82.3M163.5 73.7V91.6M165.5 72.8V90.4M166.5 74.2V84.8M167.5 70.2V83.4M168.5 73.3V89.0M169.5 71.1V85.4M173.5 70.9V93.8M174.5 76.1V87.6M175.5 74.5V88.8M176.5 71.0V91.8M178.5 74.5V92.5M179.5 72.8V86.8M180.5 71.7V94.5M182.5 78.1V92.1M183.5 76.4V91.0M186.5 79.2V94.0M187.5 78.6V90.7M190.5 78.8V94.9M191.5 78.6V87.9M192.5 76.8V87.4M193.5 78.2V94.0M194.5 80.6V94.6M195.5 78.6V93.8M196.5 76.7V98.5M197.5 79.2V96.1M199.5 78.8V96.3M200.5 77.3V89.0M201.5 77.2V89.7M202.5 81.3V94.7M203.5 81.9V95.1M205.5 81.0V90.1M206.5 80.7V89.9M208.5 78.8V91.6M209.5 80.0V90.5M211.5 79.6V96.8M212.5 77.9V97.6M213.5 78.1V98.5M214.5 76.2V93.4M215.5 77.5V99.3M216.5 83.4V99.4M217.5 84.2V101.7M218.5 83.8V96.2M219.5 84.5V94.3M220.5 84.4V99.8M221.5 84.9V101.0M222.5 78.3V99.1M223.5 79.2V92.9M224.5 78.7V97.4M225.5 81.5V95.6M226.5 81.4V101.5M227.5 86.0V103.6M228.5 80.3V94.5M230.5 83.6V97.5M231.5 84.3V100.0M232.5 84.0V102.3M233.5 81.2V105.0M236.5 80.2V97.6M237.5 84.8V95.9M238.5 80.7V95.9M239.5 84.6V102.2M240.5 84.3V97.7M241.5 86.7V105.0M242.5 82.2V104.9M243.5 87.6V98.6M244.5 84.0V105.4M245.5 87.4V107.6M246.5 86.9V105.2M248.5 86.2V98.8M250.5 84.8V104.3M251.5 89.6V101.8M252.5 85.5V101.1M253.5 85.9V102.4M254.5 90.7V102.4M255.5 88.6V107.3M256.5 87.2V107.4M257.5 93.4V110.0M259.5 93.2V104.1M260.5 90.6V110.7M262.5 90.8V105.3M263.5 91.3V105.8M264.5 92.7V110.1M265.5 94.8V108.0M266.5 94.5V111.4M267.5 89.6V107.9M268.5 93.6V112.6M269.5 95.5V103.8M270.5 95.7V104.3M271.5 95.9V112.5M272.5 95.6V105.5M273.5 96.2V106.8M274.5 97.5V109.6M275.5 95.5V107.9M277.5 96.7V108.8M278.5 98.1V111.2M279.5 98.9V108.8M285.5 98.0V105.4M287.5 97.5V100.8M288.5 98.4V100.8M289.5 97.1V101.0M290.5 98.4V100.2M291.5 97.0V101.7M292.5 97.1V100.3M293.5 97.8V102.5M294.5 97.0V100.7M295.5 97.2V102.1M296.5 97.2V100.8M297.5 97.1V102.4M298.5 97.8V102.6M299.5 97.3V102.9M301.5 97.9V103.2M302.5 96.9V100.8M305.5 96.1V104.0M306.5 97.6V105.4M307.5 92.6V104.8M308.5 96.2V106.9M309.5 92.8V102.8M310.5 93.3V108.1M311.5 95.2V109.0M312.5 94.6V102.8M313.5 91.7V107.8M316.5 92.9V107.2M317.5 94.0V105.3M319.5 95.9V104.0M320.5 93.5V108.9M321.5 95.7V103.3M322.5 93.9V102.9M324.5 92.6V102.2M325.5 93.4V107.5M326.5 94.7V102.5M327.5 93.3V109.7M329.5 90.5V104.8M330.5 91.8V106.3M331.5 90.3V109.8M332.5 91.4V106.6M333.5 92.3V105.8M334.5 92.0V104.5M335.5 91.4V102.8M336.5 91.7V108.9M337.5 94.0V103.7M339.5 90.3V101.5M340.5 93.6V102.1M341.5 94.3V105.5M342.5 90.6V101.7M343.5 91.5V100.9M345.5 92.0V105.5M346.5 93.7V103.2M347.5 91.2V100.0M348.5 92.8V108.0M349.5 92.4V104.8M350.5 90.4V102.5M351.5 89.1V102.7M352.5 93.0V106.3M353.5 89.2V105.7M355.5 90.3V103.3M356.5 92.3V107.3M357.5 92.2V105.9M358.5 93.5V104.1M359.5 88.5V100.9M360.5 91.9V101.5M362.5 90.5V99.6M364.5 92.8V102.9M365.5 90.8V100.5M369.5 88.1V104.6M370.5 92.4V99.9M371.5 92.0V99.4M372.5 87.7V98.0M373.5 92.7V105.2M374.5 88.9V102.9M375.5 89.2V102.2M377.5 88.1V101.1M378.5 89.0V101.8M379.5 89.7V99.3M380.5 88.6V102.1M381.5 90.4V98.2M383.5 89.2V100.1M384.5 90.3V102.6M385.5 89.1V104.4M388.5 88.7V100.8M390.5 89.0V99.6M392.5 86.4V101.7M394.5 89.2V101.8M395.5 89.1V96.6M396.5 88.3V99.8M397.5 86.2V101.2M398.5 87.1V98.2M399.5 87.0V96.4M402.5 90.2V98.9M404.5 89.5V99.9M406.5 89.6V96.4M407.5 90.4V95.4M408.5 86.9V97.8M409.5 90.0V101.5M410.5 87.1V99.7M411.5 85.3V102.0M412.5 87.7V102.2M414.5 86.1V97.3M417.5 89.3V97.6M418.5 85.7V101.5M420.5 88.0V96.2M422.5 85.1V100.1M423.5 89.3V101.1M424.5 85.1V99.8M426.5 84.7V96.1" stroke="#560a88" stroke-width="1" fill="none"/><path d="M0.6 27.0V57.2M5.0 32.5V61.6M11.8 40.2V65.8M16.3 46.0V86.0M21.2 47.7V79.5M32.5 52.0V80.3M34.5 52.8V83.0M37.0 53.8V73.7M43.1 55.7V75.0M47.5 56.8V90.9M54.1 58.3V85.2M69.5 62.2V86.9M85.2 66.6V97.1M87.3 67.2V88.1M89.5 67.8V90.8M106.6 70.2V100.7M108.8 70.4V91.7M110.9 70.7V99.4M113.2 71.0V100.5M120.4 72.0V95.1M122.5 72.2V95.8M124.7 72.5V89.2M129.3 73.1V96.3M131.4 73.4V98.9M133.7 73.7V88.8M135.8 74.0V103.2M149.0 76.0V94.9M151.0 76.4V103.0M165.1 78.8V110.0M169.4 79.5V95.8M178.9 81.1V111.7M185.9 82.3V105.6M188.3 82.7V110.6M195.8 83.8V100.0M197.9 84.1V106.7M201.8 84.6V108.7M206.5 85.3V104.8M212.3 86.2V112.6M214.4 86.6V122.0M221.3 87.8V115.8M228.8 89.1V107.6M258.5 96.8V131.0M279.8 101.5V125.4M297.3 99.3V122.4M299.5 99.4V111.0M308.6 99.0V117.6M311.1 98.9V118.7M313.7 98.8V132.0M317.7 98.7V117.9M336.5 97.8V123.1M343.5 97.1V118.9M345.5 96.9V124.7M347.9 96.7V128.9M352.5 96.3V128.5M371.8 94.9V110.5M374.2 94.7V124.4M384.1 93.9V116.9M398.8 93.0V107.0M402.7 92.8V106.8M414.7 92.2V122.0M422.6 91.7V116.3" stroke="#8c12cc" stroke-width="0.9" fill="none"/><path d="M0.6 2.7V41.8M2.6 9.5V45.2M5.0 14.5V42.5M7.6 17.5V38.4M9.5 21.7V42.9M11.8 20.9V49.2M14.3 24.9V47.8M16.3 27.4V54.2M19.0 27.7V53.4M21.2 32.8V54.7M23.6 31.4V58.1M25.8 33.3V61.9M28.1 36.6V51.4M30.0 36.3V53.2M32.5 38.6V62.7M34.5 38.8V58.8M37.0 40.3V65.1M38.8 41.0V59.3M40.8 43.3V54.8M43.1 42.7V65.4M45.2 40.9V59.2M47.5 42.4V63.6M49.5 42.8V58.0M52.0 45.8V57.3M54.1 43.7V70.6M56.6 47.7V59.5M59.1 44.0V61.4M61.0 46.0V62.7M62.9 44.9V73.0M65.3 46.6V63.2M67.4 48.3V73.2M69.5 51.3V69.3M71.8 47.9V66.2M74.4 51.2V74.3M76.6 53.0V68.0M78.6 51.4V65.9M80.5 51.4V66.9M82.6 53.1V77.8M85.2 52.9V70.4M87.3 53.9V66.2M89.5 57.5V75.9M91.4 57.9V71.6M93.8 58.1V67.5M96.0 54.7V78.9M98.5 57.0V68.5M100.5 55.2V70.0M102.3 56.6V73.8M104.2 58.7V71.9M106.6 56.5V71.5M108.8 57.9V80.3M110.9 57.4V70.0M113.2 60.4V82.2M115.9 58.1V78.9M118.5 61.4V73.4M120.4 59.7V75.7M122.5 60.3V74.5M124.7 59.1V79.7M126.8 60.6V73.4M129.3 61.5V80.7M131.4 59.6V77.2M133.7 61.7V76.5M135.8 63.9V79.8M137.8 62.3V80.7M139.9 63.1V85.0M142.3 63.7V78.8M144.3 64.9V85.0M147.0 61.8V76.1M149.0 63.6V87.1M151.0 65.3V78.1M153.2 63.7V81.7M155.5 65.8V83.0M158.2 64.9V80.7M160.2 67.0V85.5M162.9 67.9V79.2M165.1 67.1V82.2M167.4 66.0V81.1M169.4 67.5V79.8M171.3 68.7V80.0M173.8 68.1V81.0M176.4 66.6V82.7M178.9 68.5V89.0M181.0 68.6V90.0M183.5 70.0V86.0M185.9 71.6V91.4M188.3 69.3V83.8M190.9 73.0V83.6M193.1 71.7V87.3M195.8 69.3V91.9M197.9 72.6V96.0M199.7 71.9V89.5M201.8 73.3V94.6M204.1 73.4V96.9M206.5 72.6V94.9M208.4 74.5V87.7M210.3 72.0V84.7M212.3 73.7V88.6M214.4 72.4V85.9M216.5 71.9V88.1M219.2 72.9V98.0M221.3 76.0V91.9M223.7 75.6V90.6M226.3 77.7V93.4M228.8 74.4V88.0M230.6 75.6V98.5M232.9 74.4V91.3M234.7 77.0V100.0M237.2 76.8V100.3M239.7 79.9V91.0M241.8 79.4V93.7M243.6 79.5V93.9M245.8 80.7V102.5M248.2 80.2V96.0M250.2 79.8V97.4M252.2 83.5V100.7M254.2 81.4V96.0M256.4 81.8V101.4M258.5 84.9V107.7M260.6 86.6V97.5M262.7 88.1V99.4M265.2 85.1V100.6M267.8 86.4V100.1M270.5 86.5V106.3M272.9 88.2V106.8M275.5 91.6V106.0M277.4 93.7V107.4M279.8 93.3V104.0M282.1 94.6V100.8M284.3 95.8V104.2M286.2 95.9V104.4M288.3 97.8V101.7M290.9 95.1V101.9M292.9 98.3V100.9M295.4 98.1V100.6M297.3 98.4V101.4M299.5 96.9V102.0M301.9 94.8V101.1M304.1 93.5V103.1M306.6 92.3V105.4M308.6 90.1V99.0M311.1 91.9V99.1M313.7 90.7V106.4M315.7 90.6V106.2M317.7 90.5V101.9M319.8 90.2V100.4M322.2 87.9V98.9M324.4 87.5V98.7M326.7 88.3V99.5M329.2 89.8V101.2M331.3 86.9V103.9M333.9 87.9V101.8M336.5 87.3V104.2M338.6 89.5V99.6M341.0 87.4V106.1M343.5 87.8V100.8M345.5 86.9V105.9M347.9 85.8V100.0M349.9 86.4V99.0M352.5 87.0V101.0M354.4 85.9V99.0M356.8 85.7V104.2M358.6 86.9V99.7M360.8 85.4V101.5M363.5 88.2V104.6M366.0 86.6V101.4M367.9 85.7V98.2M369.9 88.0V96.1M371.8 85.2V101.3M374.2 86.1V101.0M376.7 86.7V94.7M378.5 86.9V102.6M380.3 84.6V98.5M382.2 86.4V96.0M384.1 85.3V94.2M386.2 86.2V95.2M388.0 83.6V97.0M390.3 86.3V93.5M392.2 86.7V97.4M394.5 86.1V101.5M396.4 82.8V100.0M398.8 82.7V97.1M400.9 86.3V98.1M402.7 83.7V92.6M405.3 83.2V96.4M407.9 85.8V97.0M410.5 83.2V94.3M412.6 82.9V95.4M414.7 83.1V95.5M416.6 83.4V96.3M418.6 81.4V94.5M420.8 81.9V98.0M422.6 82.6V100.0M425.3 82.2V96.3" stroke="#a616ea" stroke-width="1" fill="none"/><line x1="19.5" y1="0" x2="19.5" y2="189" stroke="#ffffff" stroke-opacity="0.175" stroke-width="1"/><line x1="38.5" y1="0" x2="38.5" y2="189" stroke="#ffffff" stroke-opacity="0.175" stroke-width="1"/><line x1="58.5" y1="0" x2="58.5" y2="189" stroke="#ffffff" stroke-opacity="0.175" stroke-width="1"/><line x1="77.5" y1="0" x2="77.5" y2="189" stroke="#ffffff" stroke-opacity="0.175" stroke-width="1"/><line x1="97.5" y1="0" x2="97.5" y2="189" stroke="#ffffff" stroke-opacity="0.175" stroke-width="1"/><line x1="116.5" y1="0" x2="116.5" y2="189" stroke="#ffffff" stroke-opacity="0.175" stroke-width="1"/><line x1="135.5" y1="0" x2="135.5" y2="189" stroke="#ffffff" stroke-opacity="0.175" stroke-width="1"/><line x1="155.5" y1="0" x2="155.5" y2="189" stroke="#ffffff" stroke-opacity="0.175" stroke-width="1"/><line x1="174.5" y1="0" x2="174.5" y2="189" stroke="#ffffff" stroke-opacity="0.175" stroke-width="1"/><line x1="193.5" y1="0" x2="193.5" y2="189" stroke="#ffffff" stroke-opacity="0.175" stroke-width="1"/><line x1="213.5" y1="0" x2="213.5" y2="189" stroke="#ffffff" stroke-opacity="0.175" stroke-width="1"/><line x1="232.5" y1="0" x2="232.5" y2="189" stroke="#ffffff" stroke-opacity="0.175" stroke-width="1"/><line x1="251.5" y1="0" x2="251.5" y2="189" stroke="#ffffff" stroke-opacity="0.175" stroke-width="1"/><line x1="271.5" y1="0" x2="271.5" y2="189" stroke="#ffffff" stroke-opacity="0.175" stroke-width="1"/><line x1="290.5" y1="0" x2="290.5" y2="189" stroke="#ffffff" stroke-opacity="0.175" stroke-width="1"/><line x1="309.5" y1="0" x2="309.5" y2="189" stroke="#ffffff" stroke-opacity="0.175" stroke-width="1"/><line x1="329.5" y1="0" x2="329.5" y2="189" stroke="#ffffff" stroke-opacity="0.175" stroke-width="1"/><line x1="348.5" y1="0" x2="348.5" y2="189" stroke="#ffffff" stroke-opacity="0.175" stroke-width="1"/><line x1="368.5" y1="0" x2="368.5" y2="189" stroke="#ffffff" stroke-opacity="0.175" stroke-width="1"/><line x1="387.5" y1="0" x2="387.5" y2="189" stroke="#ffffff" stroke-opacity="0.175" stroke-width="1"/><line x1="406.5" y1="0" x2="406.5" y2="189" stroke="#ffffff" stroke-opacity="0.175" stroke-width="1"/><line x1="0" y1="13.5" x2="427" y2="13.5" stroke="#ffffff" stroke-opacity="0.175" stroke-width="1"/><line x1="0" y1="27.5" x2="427" y2="27.5" stroke="#ffffff" stroke-opacity="0.175" stroke-width="1"/><line x1="0" y1="41.5" x2="427" y2="41.5" stroke="#ffffff" stroke-opacity="0.175" stroke-width="1"/><line x1="0" y1="55.5" x2="427" y2="55.5" stroke="#ffffff" stroke-opacity="0.175" stroke-width="1"/><line x1="0" y1="69.5" x2="427" y2="69.5" stroke="#ffffff" stroke-opacity="0.175" stroke-width="1"/><line x1="0" y1="83.5" x2="427" y2="83.5" stroke="#ffffff" stroke-opacity="0.175" stroke-width="1"/><line x1="0" y1="97.5" x2="427" y2="97.5" stroke="#ffffff" stroke-opacity="0.175" stroke-width="1"/><line x1="0" y1="110.5" x2="427" y2="110.5" stroke="#ffffff" stroke-opacity="0.175" stroke-width="1"/><line x1="0" y1="124.5" x2="427" y2="124.5" stroke="#ffffff" stroke-opacity="0.175" stroke-width="1"/><line x1="0" y1="138.5" x2="427" y2="138.5" stroke="#ffffff" stroke-opacity="0.175" stroke-width="1"/><line x1="0" y1="152.5" x2="427" y2="152.5" stroke="#ffffff" stroke-opacity="0.175" stroke-width="1"/><line x1="0" y1="166.5" x2="427" y2="166.5" stroke="#ffffff" stroke-opacity="0.175" stroke-width="1"/><line x1="0" y1="180.5" x2="427" y2="180.5" stroke="#ffffff" stroke-opacity="0.175" stroke-width="1"/></svg>
<div class="a" style="left:436px;top:239px;width:1px;height:189px;background:#2e2a2e"></div>
<div class="t" style="left:377.9px;top:239.6px;font-size:6.8px;color:#8a10cc;transform:scaleX(0.72);transform-origin:0 0">9541.78 Hz</div>
<div class="t" style="left:412.9px;top:239.6px;font-size:6.8px;color:#8a10cc;transform:scaleX(0.76);transform-origin:0 0">-45.33 dB</div>
<div class="t" style="left:2.5px;top:239.5px;font-size:4.2px;color:#3a3a3a;background:#dedede;padding:0 0.3px">0</div>
<div class="a" style="left:7px;top:245.4px;width:2.5px;height:0.7px;background:#8a8a8a"></div>
<div class="a" style="left:1px;top:252.4px;width:9px;height:0.7px;background:#7a7a7a"></div>
<div class="t" style="left:2.5px;top:250.5px;font-size:4.2px;color:#3a3a3a;background:#dedede;padding:0 0.3px">-10</div>
<div class="a" style="left:7px;top:259.3px;width:2.5px;height:0.7px;background:#8a8a8a"></div>
<div class="a" style="left:1px;top:266.3px;width:9px;height:0.7px;background:#7a7a7a"></div>
<div class="t" style="left:2.5px;top:264.4px;font-size:4.2px;color:#3a3a3a;background:#dedede;padding:0 0.3px">-20</div>
<div class="a" style="left:7px;top:273.2px;width:2.5px;height:0.7px;background:#8a8a8a"></div>
<div class="a" style="left:1px;top:280.2px;width:9px;height:0.7px;background:#7a7a7a"></div>
<div class="t" style="left:2.5px;top:278.3px;font-size:4.2px;color:#3a3a3a;background:#dedede;padding:0 0.3px">-30</div>
<div class="a" style="left:7px;top:287.1px;width:2.5px;height:0.7px;background:#8a8a8a"></div>
<div class="a" style="left:1px;top:294.1px;width:9px;height:0.7px;background:#7a7a7a"></div>
<div class="t" style="left:2.5px;top:292.2px;font-size:4.2px;color:#3a3a3a;background:#dedede;padding:0 0.3px">-40</div>
<div class="a" style="left:7px;top:301.0px;width:2.5px;height:0.7px;background:#8a8a8a"></div>
<div class="a" style="left:1px;top:308.0px;width:9px;height:0.7px;background:#7a7a7a"></div>
<div class="t" style="left:2.5px;top:306.1px;font-size:4.2px;color:#3a3a3a;background:#dedede;padding:0 0.3px">-50</div>
<div class="a" style="left:7px;top:314.9px;width:2.5px;height:0.7px;background:#8a8a8a"></div>
<div class="a" style="left:1px;top:321.9px;width:9px;height:0.7px;background:#7a7a7a"></div>
<div class="t" style="left:2.5px;top:320.0px;font-size:4.2px;color:#3a3a3a;background:#dedede;padding:0 0.3px">-60</div>
<div class="a" style="left:7px;top:328.8px;width:2.5px;height:0.7px;background:#8a8a8a"></div>
<div class="a" style="left:1px;top:335.8px;width:9px;height:0.7px;background:#7a7a7a"></div>
<div class="t" style="left:2.5px;top:333.9px;font-size:4.2px;color:#3a3a3a;background:#dedede;padding:0 0.3px">-70</div>
<div class="a" style="left:7px;top:342.7px;width:2.5px;height:0.7px;background:#8a8a8a"></div>
<div class="a" style="left:1px;top:349.7px;width:9px;height:0.7px;background:#7a7a7a"></div>
<div class="t" style="left:2.5px;top:347.8px;font-size:4.2px;color:#3a3a3a;background:#dedede;padding:0 0.3px">-80</div>
<div class="a" style="left:7px;top:356.6px;width:2.5px;height:0.7px;background:#8a8a8a"></div>
<div class="a" style="left:1px;top:363.6px;width:9px;height:0.7px;background:#7a7a7a"></div>
<div class="t" style="left:2.5px;top:361.7px;font-size:4.2px;color:#3a3a3a;background:#dedede;padding:0 0.3px">-90</div>
<div class="a" style="left:7px;top:370.5px;width:2.5px;height:0.7px;background:#8a8a8a"></div>
<div class="a" style="left:1px;top:377.5px;width:9px;height:0.7px;background:#7a7a7a"></div>
<div class="t" style="left:1.5px;top:375.6px;font-size:4.2px;color:#3a3a3a;background:#dedede;padding:0 0.3px">-100</div>
<div class="a" style="left:7px;top:384.4px;width:2.5px;height:0.7px;background:#8a8a8a"></div>
<div class="a" style="left:1px;top:391.4px;width:9px;height:0.7px;background:#7a7a7a"></div>
<div class="t" style="left:1.5px;top:389.5px;font-size:4.2px;color:#3a3a3a;background:#dedede;padding:0 0.3px">-110</div>
<div class="a" style="left:7px;top:398.3px;width:2.5px;height:0.7px;background:#8a8a8a"></div>
<div class="a" style="left:1px;top:405.3px;width:9px;height:0.7px;background:#7a7a7a"></div>
<div class="t" style="left:1.5px;top:403.4px;font-size:4.2px;color:#3a3a3a;background:#dedede;padding:0 0.3px">-120</div>
<div class="a" style="left:7px;top:412.2px;width:2.5px;height:0.7px;background:#8a8a8a"></div>
<div class="a" style="left:1px;top:419.2px;width:9px;height:0.7px;background:#7a7a7a"></div>
<div class="t" style="left:1.5px;top:417.3px;font-size:4.2px;color:#3a3a3a;background:#dedede;padding:0 0.3px">-130</div>
<div class="a" style="left:7px;top:426.1px;width:2.5px;height:0.7px;background:#8a8a8a"></div>
<div class="a" style="left:0;top:428px;width:700px;height:10px;background:#dadada;border-top:1px solid #d0d0d0"></div>
<div class="a" style="left:0;top:428px;width:16px;height:10px;background:#d0d0ce"></div>
<svg class="a" style="left:1.5px;top:428.3px" width="12" height="10" viewBox="0 0 12 10"><path d="M5 1.6 H6.8 A3.5 3.4 0 0 1 6.8 8.4 H5" fill="none" stroke="#6a8a42" stroke-width="1.2"/><path d="M6.2 3.3 A1.8 1.7 0 0 1 6.2 6.7" fill="none" stroke="#7a9a52" stroke-width="0.9"/><path d="M2.2 2.3 L6.3 5 L2.2 7.7 Z" fill="#86b44c"/></svg>
<div class="a" style="left:366.1px;top:428px;width:87.5px;height:10px;background:linear-gradient(#728c5c,#647850);border-top:1px solid #88a074"></div>
<svg class="a" style="left:0;top:420px" width="700" height="18"><ellipse cx="24.0" cy="13" rx="3.3" ry="3.4" fill="#d41a1a"/><ellipse cx="24.0" cy="13" rx="1" ry="2.4" fill="#f4eaea"/></svg>
<div class="t" style="left:30.5px;top:431px;font-size:5.99px;color:#4a4a4a">[Преобразование Фурь...</div>
<div class="a" style="left:108px;top:430.5px;width:6.5px;height:4.5px;background:#505050;border:0.6px solid #888"></div><div class="a" style="left:109.5px;top:435px;width:3.5px;height:1px;background:#999"></div>
<div class="t" style="left:117px;top:431px;font-size:6.07px;color:#4a4a4a">[andrey@andrey-PC: ~/...</div>
<div class="a" style="left:195px;top:430px;width:6.5px;height:6.5px;background:linear-gradient(#2050a0,#30a080);border:0.8px solid #502070"></div>
<div class="t" style="left:205px;top:431px;font-size:5.95px;color:#4a4a4a">baudline</div>
<div class="a" style="left:283px;top:430px;width:6.5px;height:6.5px;background:linear-gradient(135deg,#2040c0,#d02080 50%,#20a060);border:0.6px solid #303060"></div>
<div class="t" style="left:292.5px;top:431px;font-size:6.13px;color:#4a4a4a">input mapping</div>
<div class="a" style="left:370px;top:430px;width:6.5px;height:6.8px;background:#0a7a6a;border:0.8px solid #7020a0"></div><div class="a" style="left:372.7px;top:431.5px;width:1px;height:3.5px;background:#000"></div><div class="a" style="left:371.7px;top:431.3px;width:3px;height:0.8px;background:#000"></div>
<div class="t" style="left:379.5px;top:431px;font-size:6.10px;color:#3a4a34">primary Hz</div>
<div class="a" style="left:457.5px;top:430px;width:6.5px;height:6.8px;background:#0a7a6a;border:0.8px solid #7020a0"></div><div class="a" style="left:460.2px;top:431.5px;width:1px;height:3.5px;background:#000"></div><div class="a" style="left:459.2px;top:431.3px;width:3px;height:0.8px;background:#000"></div>
<div class="t" style="left:467px;top:431px;font-size:5.89px;color:#4a4a4a">secondary Hz</div>
<div class="a" style="left:545px;top:430px;width:6.5px;height:6.8px;background:#0a7a6a;border:0.8px solid #7020a0"></div><div class="a" style="left:547.7px;top:431.5px;width:1px;height:3.5px;background:#000"></div><div class="a" style="left:546.7px;top:431.3px;width:3px;height:0.8px;background:#000"></div>
<div class="t" style="left:555px;top:431px;font-size:5.72px;color:#4a4a4a">delta Hz</div>
<div class="a" style="left:665.7px;top:429.1px;width:15.2px;height:7.8px;background:linear-gradient(#050505 0,#050505 3.6px,#1a8ad8 4px,#1a8ad8 100%);border-radius:0.5px"></div>
<div class="a" style="left:683px;top:429.1px;width:15px;height:7.8px;background:linear-gradient(#202020 0,#202020 1.3px,#a8f0c0 1.5px,#a8f0c0 3px,#10b050 3.3px,#10b050 100%);border-radius:0.5px"></div>
<div class="a" style="left:442.5px;top:36px;width:257.5px;height:251px;background:#dcdcdc;border-top-left-radius:3px;border-left:1px solid #c0c0be;border-bottom:1px solid #a8a8a6"></div>
<div class="a" style="left:442.5px;top:36px;width:257.5px;height:11px;background:linear-gradient(#eeeeec,#dededc);border-top-left-radius:3px"></div>
<div class="a" style="left:448px;top:41px;width:3px;height:3px;border-radius:50%;background:#fff"></div>
<div class="t" style="left:570.7px;top:38px;font-size:7.3px;color:#b0b0b0">input mapping</div>
<div class="t mono" style="left:449px;top:50.2px;font-size:6px;font-weight:bold;color:#1a1a1a;transform:scaleX(0.8);transform-origin:0 0;opacity:0.85">Channel</div>
<div class="t mono" style="left:503px;top:50.2px;font-size:6px;font-weight:bold;color:#1a1a1a;transform:scaleX(0.8);transform-origin:0 0;opacity:0.85">Operation</div>
<div class="t mono" style="left:546.4px;top:50.2px;font-size:6px;font-weight:bold;color:#1a1a1a;transform:scaleX(0.8);transform-origin:0 0;opacity:0.85">Transform</div>
<div class="t mono" style="left:604.3px;top:50.2px;font-size:6px;font-weight:bold;color:#1a1a1a;transform:scaleX(0.8);transform-origin:0 0;opacity:0.85">Space</div>
<div class="t mono" style="left:650.7px;top:50.2px;font-size:6px;font-weight:bold;color:#1a1a1a;transform:scaleX(0.8);transform-origin:0 0;opacity:0.85">y Channel</div>
<div class="a" style="left:447px;top:58.5px;width:62.5px;height:10px;background:linear-gradient(#e3e3e3,#d9d9d9);border-bottom:1px solid #6e6e6e;border-right:1px solid #7a7a7a"></div>
<div class="a" style="left:501.5px;top:63.9px;width:4px;height:0.7px;background:#6a6a6a"></div><div class="a" style="left:504.8px;top:62.6px;width:0.7px;height:1.6px;background:#6a6a6a"></div>
<div class="t mono" style="left:449px;top:62.0px;font-size:6px;font-weight:bold;color:#1a1a1a;transform:scaleX(0.8);transform-origin:0 0;">stdin 1</div>
<div class="a" style="left:510px;top:58.5px;width:36.5px;height:10px;background:linear-gradient(#e3e3e3,#d9d9d9);border-bottom:1px solid #6e6e6e;border-right:1px solid #7a7a7a"></div>
<div class="a" style="left:538.5px;top:63.9px;width:4px;height:0.7px;background:#6a6a6a"></div><div class="a" style="left:541.8px;top:62.6px;width:0.7px;height:1.6px;background:#6a6a6a"></div>
<div class="t mono" style="left:513.6px;top:62.0px;font-size:6px;font-weight:bold;color:#1a1a1a;transform:scaleX(0.8);transform-origin:0 0;">none</div>
<div class="a" style="left:547px;top:58.5px;width:58px;height:10px;background:linear-gradient(#e3e3e3,#d9d9d9);border-bottom:1px solid #6e6e6e;border-right:1px solid #7a7a7a"></div>
<div class="a" style="left:597px;top:63.9px;width:4px;height:0.7px;background:#6a6a6a"></div><div class="a" style="left:600.3px;top:62.6px;width:0.7px;height:1.6px;background:#6a6a6a"></div>
<div class="t mono" style="left:560.7px;top:62.0px;font-size:6px;font-weight:bold;color:#1a1a1a;transform:scaleX(0.8);transform-origin:0 0;">Fourier</div>
<div class="a" style="left:606px;top:58.5px;width:44px;height:10px;background:linear-gradient(#e3e3e3,#d9d9d9);border-bottom:1px solid #6e6e6e;border-right:1px solid #7a7a7a"></div>
<div class="a" style="left:642px;top:63.9px;width:4px;height:0.7px;background:#6a6a6a"></div><div class="a" style="left:645.3px;top:62.6px;width:0.7px;height:1.6px;background:#6a6a6a"></div>
<div class="t mono" style="left:608.6px;top:62.0px;font-size:6px;font-weight:bold;color:#1a1a1a;transform:scaleX(0.8);transform-origin:0 0;">magnitude</div>
<div class="a" style="left:650.5px;top:58.5px;width:48.10000000000002px;height:10px;background:linear-gradient(#e3e3e3,#d9d9d9);border-bottom:1px solid #6e6e6e;border-right:1px solid #7a7a7a"></div>
<div class="a" style="left:690.6px;top:63.9px;width:4px;height:0.7px;background:#6a6a6a"></div><div class="a" style="left:693.9px;top:62.6px;width:0.7px;height:1.6px;background:#6a6a6a"></div>
<div class="t mono" style="left:651px;top:62.0px;font-size:6px;font-weight:normal;color:#989898;transform:scaleX(0.8);transform-origin:0 0;">dim 1</div>
<div class="a" style="left:447px;top:73.5px;width:62.5px;height:10px;background:linear-gradient(#e3e3e3,#d9d9d9);border-bottom:1px solid #6e6e6e;border-right:1px solid #7a7a7a"></div>
<div class="a" style="left:501.5px;top:78.9px;width:4px;height:0.7px;background:#6a6a6a"></div><div class="a" style="left:504.8px;top:77.6px;width:0.7px;height:1.6px;background:#6a6a6a"></div>
<div class="t mono" style="left:469px;top:77.0px;font-size:6px;font-weight:bold;color:#1e1e1e;transform:scaleX(0.8);transform-origin:0 0;">OFF</div>
<div class="a" style="left:510px;top:73.5px;width:36.5px;height:10px;background:linear-gradient(#e3e3e3,#d9d9d9);border-bottom:1px solid #6e6e6e;border-right:1px solid #7a7a7a"></div>
<div class="a" style="left:538.5px;top:78.9px;width:4px;height:0.7px;background:#6a6a6a"></div><div class="a" style="left:541.8px;top:77.6px;width:0.7px;height:1.6px;background:#6a6a6a"></div>
<div class="t mono" style="left:513.6px;top:77.0px;font-size:6px;font-weight:normal;color:#989898;transform:scaleX(0.8);transform-origin:0 0;">none</div>
<div class="a" style="left:547px;top:73.5px;width:56px;height:10px;background:linear-gradient(#e3e3e3,#d9d9d9);border-bottom:1px solid #6e6e6e;border-right:1px solid #7a7a7a"></div>
<div class="a" style="left:595px;top:78.9px;width:4px;height:0.7px;background:#6a6a6a"></div><div class="a" style="left:598.3px;top:77.6px;width:0.7px;height:1.6px;background:#6a6a6a"></div>
<div class="t mono" style="left:565px;top:77.0px;font-size:6px;font-weight:normal;color:#989898;transform:scaleX(0.8);transform-origin:0 0;">OFF</div>
<div class="a" style="left:604px;top:73.5px;width:43.39999999999998px;height:10px;background:linear-gradient(#e3e3e3,#d9d9d9);border-bottom:1px solid #6e6e6e;border-right:1px solid #7a7a7a"></div>
<div class="a" style="left:639.4px;top:78.9px;width:4px;height:0.7px;background:#6a6a6a"></div><div class="a" style="left:642.6999999999999px;top:77.6px;width:0.7px;height:1.6px;background:#6a6a6a"></div>
<div class="t mono" style="left:607px;top:77.0px;font-size:6px;font-weight:normal;color:#989898;transform:scaleX(0.8);transform-origin:0 0;">magnitude</div>
<div class="a" style="left:649.3px;top:73.5px;width:49.30000000000007px;height:10px;background:linear-gradient(#e3e3e3,#d9d9d9);border-bottom:1px solid #6e6e6e;border-right:1px solid #7a7a7a"></div>
<div class="a" style="left:690.6px;top:78.9px;width:4px;height:0.7px;background:#6a6a6a"></div><div class="a" style="left:693.9px;top:77.6px;width:0.7px;height:1.6px;background:#6a6a6a"></div>
<div class="t mono" style="left:651px;top:77.0px;font-size:6px;font-weight:normal;color:#989898;transform:scaleX(0.8);transform-origin:0 0;">dim 1</div>
<div class="a" style="left:447px;top:88.5px;width:62.5px;height:10px;background:linear-gradient(#e3e3e3,#d9d9d9);border-bottom:1px solid #6e6e6e;border-right:1px solid #7a7a7a"></div>
<div class="a" style="left:501.5px;top:93.9px;width:4px;height:0.7px;background:#6a6a6a"></div><div class="a" style="left:504.8px;top:92.6px;width:0.7px;height:1.6px;background:#6a6a6a"></div>
<div class="t mono" style="left:469px;top:92.0px;font-size:6px;font-weight:bold;color:#1e1e1e;transform:scaleX(0.8);transform-origin:0 0;">OFF</div>
<div class="a" style="left:510px;top:88.5px;width:36.5px;height:10px;background:linear-gradient(#e3e3e3,#d9d9d9);border-bottom:1px solid #6e6e6e;border-right:1px solid #7a7a7a"></div>
<div class="a" style="left:538.5px;top:93.9px;width:4px;height:0.7px;background:#6a6a6a"></div><div class="a" style="left:541.8px;top:92.6px;width:0.7px;height:1.6px;background:#6a6a6a"></div>
<div class="t mono" style="left:513.6px;top:92.0px;font-size:6px;font-weight:normal;color:#989898;transform:scaleX(0.8);transform-origin:0 0;">none</div>
<div class="a" style="left:547px;top:88.5px;width:56px;height:10px;background:linear-gradient(#e3e3e3,#d9d9d9);border-bottom:1px solid #6e6e6e;border-right:1px solid #7a7a7a"></div>
<div class="a" style="left:595px;top:93.9px;width:4px;height:0.7px;background:#6a6a6a"></div><div class="a" style="left:598.3px;top:92.6px;width:0.7px;height:1.6px;background:#6a6a6a"></div>
<div class="t mono" style="left:565px;top:92.0px;font-size:6px;font-weight:normal;color:#989898;transform:scaleX(0.8);transform-origin:0 0;">OFF</div>
<div class="a" style="left:604px;top:88.5px;width:43.39999999999998px;height:10px;background:linear-gradient(#e3e3e3,#d9d9d9);border-bottom:1px solid #6e6e6e;border-right:1px solid #7a7a7a"></div>
<div class="a" style="left:639.4px;top:93.9px;width:4px;height:0.7px;background:#6a6a6a"></div><div class="a" style="left:642.6999999999999px;top:92.6px;width:0.7px;height:1.6px;background:#6a6a6a"></div>
<div class="t mono" style="left:607px;top:92.0px;font-size:6px;font-weight:normal;color:#989898;transform:scaleX(0.8);transform-origin:0 0;">magnitude</div>
<div class="a" style="left:649.3px;top:88.5px;width:49.30000000000007px;height:10px;background:linear-gradient(#e3e3e3,#d9d9d9);border-bottom:1px solid #6e6e6e;border-right:1px solid #7a7a7a"></div>
<div class="a" style="left:690.6px;top:93.9px;width:4px;height:0.7px;background:#6a6a6a"></div><div class="a" style="left:693.9px;top:92.6px;width:0.7px;height:1.6px;background:#6a6a6a"></div>
<div class="t mono" style="left:651px;top:92.0px;font-size:6px;font-weight:normal;color:#989898;transform:scaleX(0.8);transform-origin:0 0;">dim 1</div>
<div class="a" style="left:447px;top:103.5px;width:62.5px;height:10px;background:linear-gradient(#e3e3e3,#d9d9d9);border-bottom:1px solid #6e6e6e;border-right:1px solid #7a7a7a"></div>
<div class="a" style="left:501.5px;top:108.9px;width:4px;height:0.7px;background:#6a6a6a"></div><div class="a" style="left:504.8px;top:107.6px;width:0.7px;height:1.6px;background:#6a6a6a"></div>
<div class="t mono" style="left:469px;top:107.0px;font-size:6px;font-weight:bold;color:#1e1e1e;transform:scaleX(0.8);transform-origin:0 0;">OFF</div>
<div class="a" style="left:510px;top:103.5px;width:36.5px;height:10px;background:linear-gradient(#e3e3e3,#d9d9d9);border-bottom:1px solid #6e6e6e;border-right:1px solid #7a7a7a"></div>
<div class="a" style="left:538.5px;top:108.9px;width:4px;height:0.7px;background:#6a6a6a"></div><div class="a" style="left:541.8px;top:107.6px;width:0.7px;height:1.6px;background:#6a6a6a"></div>
<div class="t mono" style="left:513.6px;top:107.0px;font-size:6px;font-weight:normal;color:#989898;transform:scaleX(0.8);transform-origin:0 0;">none</div>
<div class="a" style="left:547px;top:103.5px;width:56px;height:10px;background:linear-gradient(#e3e3e3,#d9d9d9);border-bottom:1px solid #6e6e6e;border-right:1px solid #7a7a7a"></div>
<div class="a" style="left:595px;top:108.9px;width:4px;height:0.7px;background:#6a6a6a"></div><div class="a" style="left:598.3px;top:107.6px;width:0.7px;height:1.6px;background:#6a6a6a"></div>
<div class="t mono" style="left:565px;top:107.0px;font-size:6px;font-weight:normal;color:#989898;transform:scaleX(0.8);transform-origin:0 0;">OFF</div>
<div class="a" style="left:604px;top:103.5px;width:43.39999999999998px;height:10px;background:linear-gradient(#e3e3e3,#d9d9d9);border-bottom:1px solid #6e6e6e;border-right:1px solid #7a7a7a"></div>
<div class="a" style="left:639.4px;top:108.9px;width:4px;height:0.7px;background:#6a6a6a"></div><div class="a" style="left:642.6999999999999px;top:107.6px;width:0.7px;height:1.6px;background:#6a6a6a"></div>
<div class="t mono" style="left:607px;top:107.0px;font-size:6px;font-weight:normal;color:#989898;transform:scaleX(0.8);transform-origin:0 0;">magnitude</div>
<div class="a" style="left:649.3px;top:103.5px;width:49.30000000000007px;height:10px;background:linear-gradient(#e3e3e3,#d9d9d9);border-bottom:1px solid #6e6e6e;border-right:1px solid #7a7a7a"></div>
<div class="a" style="left:690.6px;top:108.9px;width:4px;height:0.7px;background:#6a6a6a"></div><div class="a" style="left:693.9px;top:107.6px;width:0.7px;height:1.6px;background:#6a6a6a"></div>
<div class="t mono" style="left:651px;top:107.0px;font-size:6px;font-weight:normal;color:#989898;transform:scaleX(0.8);transform-origin:0 0;">dim 1</div>
<div class="a" style="left:447px;top:118.5px;width:62.5px;height:10px;background:linear-gradient(#e3e3e3,#d9d9d9);border-bottom:1px solid #6e6e6e;border-right:1px solid #7a7a7a"></div>
<div class="a" style="left:501.5px;top:123.9px;width:4px;height:0.7px;background:#6a6a6a"></div><div class="a" style="left:504.8px;top:122.6px;width:0.7px;height:1.6px;background:#6a6a6a"></div>
<div class="t mono" style="left:469px;top:122.0px;font-size:6px;font-weight:bold;color:#1e1e1e;transform:scaleX(0.8);transform-origin:0 0;">OFF</div>
<div class="a" style="left:510px;top:118.5px;width:36.5px;height:10px;background:linear-gradient(#e3e3e3,#d9d9d9);border-bottom:1px solid #6e6e6e;border-right:1px solid #7a7a7a"></div>
<div class="a" style="left:538.5px;top:123.9px;width:4px;height:0.7px;background:#6a6a6a"></div><div class="a" style="left:541.8px;top:122.6px;width:0.7px;height:1.6px;background:#6a6a6a"></div>
<div class="t mono" style="left:513.6px;top:122.0px;font-size:6px;font-weight:normal;color:#989898;transform:scaleX(0.8);transform-origin:0 0;">none</div>
<div class="a" style="left:547px;top:118.5px;width:56px;height:10px;background:linear-gradient(#e3e3e3,#d9d9d9);border-bottom:1px solid #6e6e6e;border-right:1px solid #7a7a7a"></div>
<div class="a" style="left:595px;top:123.9px;width:4px;height:0.7px;background:#6a6a6a"></div><div class="a" style="left:598.3px;top:122.6px;width:0.7px;height:1.6px;background:#6a6a6a"></div>
<div class="t mono" style="left:565px;top:122.0px;font-size:6px;font-weight:normal;color:#989898;transform:scaleX(0.8);transform-origin:0 0;">OFF</div>
<div class="a" style="left:604px;top:118.5px;width:43.39999999999998px;height:10px;background:linear-gradient(#e3e3e3,#d9d9d9);border-bottom:1px solid #6e6e6e;border-right:1px solid #7a7a7a"></div>
<div class="a" style="left:639.4px;top:123.9px;width:4px;height:0.7px;background:#6a6a6a"></div><div class="a" style="left:642.6999999999999px;top:122.6px;width:0.7px;height:1.6px;background:#6a6a6a"></div>
<div class="t mono" style="left:607px;top:122.0px;font-size:6px;font-weight:normal;color:#989898;transform:scaleX(0.8);transform-origin:0 0;">magnitude</div>
<div class="a" style="left:649.3px;top:118.5px;width:49.30000000000007px;height:10px;background:linear-gradient(#e3e3e3,#d9d9d9);border-bottom:1px solid #6e6e6e;border-right:1px solid #7a7a7a"></div>
<div class="a" style="left:690.6px;top:123.9px;width:4px;height:0.7px;background:#6a6a6a"></div><div class="a" style="left:693.9px;top:122.6px;width:0.7px;height:1.6px;background:#6a6a6a"></div>
<div class="t mono" style="left:651px;top:122.0px;font-size:6px;font-weight:normal;color:#989898;transform:scaleX(0.8);transform-origin:0 0;">dim 1</div>
<div class="a" style="left:447px;top:133.5px;width:62.5px;height:10px;background:linear-gradient(#e3e3e3,#d9d9d9);border-bottom:1px solid #6e6e6e;border-right:1px solid #7a7a7a"></div>
<div class="a" style="left:501.5px;top:138.9px;width:4px;height:0.7px;background:#6a6a6a"></div><div class="a" style="left:504.8px;top:137.6px;width:0.7px;height:1.6px;background:#6a6a6a"></div>
<div class="t mono" style="left:469px;top:137.0px;font-size:6px;font-weight:bold;color:#1e1e1e;transform:scaleX(0.8);transform-origin:0 0;">OFF</div>
<div class="a" style="left:510px;top:133.5px;width:36.5px;height:10px;background:linear-gradient(#e3e3e3,#d9d9d9);border-bottom:1px solid #6e6e6e;border-right:1px solid #7a7a7a"></div>
<div class="a" style="left:538.5px;top:138.9px;width:4px;height:0.7px;background:#6a6a6a"></div><div class="a" style="left:541.8px;top:137.6px;width:0.7px;height:1.6px;background:#6a6a6a"></div>
<div class="t mono" style="left:513.6px;top:137.0px;font-size:6px;font-weight:normal;color:#989898;transform:scaleX(0.8);transform-origin:0 0;">none</div>
<div class="a" style="left:547px;top:133.5px;width:56px;height:10px;background:linear-gradient(#e3e3e3,#d9d9d9);border-bottom:1px solid #6e6e6e;border-right:1px solid #7a7a7a"></div>
<div class="a" style="left:595px;top:138.9px;width:4px;height:0.7px;background:#6a6a6a"></div><div class="a" style="left:598.3px;top:137.6px;width:0.7px;height:1.6px;background:#6a6a6a"></div>
<div class="t mono" style="left:565px;top:137.0px;font-size:6px;font-weight:normal;color:#989898;transform:scaleX(0.8);transform-origin:0 0;">OFF</div>
<div class="a" style="left:604px;top:133.5px;width:43.39999999999998px;height:10px;background:linear-gradient(#e3e3e3,#d9d9d9);border-bottom:1px solid #6e6e6e;border-right:1px solid #7a7a7a"></div>
<div class="a" style="left:639.4px;top:138.9px;width:4px;height:0.7px;background:#6a6a6a"></div><div class="a" style="left:642.6999999999999px;top:137.6px;width:0.7px;height:1.6px;background:#6a6a6a"></div>
<div class="t mono" style="left:607px;top:137.0px;font-size:6px;font-weight:normal;color:#989898;transform:scaleX(0.8);transform-origin:0 0;">magnitude</div>
<div class="a" style="left:649.3px;top:133.5px;width:49.30000000000007px;height:10px;background:linear-gradient(#e3e3e3,#d9d9d9);border-bottom:1px solid #6e6e6e;border-right:1px solid #7a7a7a"></div>
<div class="a" style="left:690.6px;top:138.9px;width:4px;height:0.7px;background:#6a6a6a"></div><div class="a" style="left:693.9px;top:137.6px;width:0.7px;height:1.6px;background:#6a6a6a"></div>
<div class="t mono" style="left:651px;top:137.0px;font-size:6px;font-weight:normal;color:#989898;transform:scaleX(0.8);transform-origin:0 0;">dim 1</div>
<div class="a" style="left:447px;top:148.5px;width:62.5px;height:10px;background:linear-gradient(#e3e3e3,#d9d9d9);border-bottom:1px solid #6e6e6e;border-right:1px solid #7a7a7a"></div>
<div class="a" style="left:501.5px;top:153.9px;width:4px;height:0.7px;background:#6a6a6a"></div><div class="a" style="left:504.8px;top:152.6px;width:0.7px;height:1.6px;background:#6a6a6a"></div>
<div class="t mono" style="left:469px;top:152.0px;font-size:6px;font-weight:bold;color:#1e1e1e;transform:scaleX(0.8);transform-origin:0 0;">OFF</div>
<div class="a" style="left:510px;top:148.5px;width:36.5px;height:10px;background:linear-gradient(#e3e3e3,#d9d9d9);border-bottom:1px solid #6e6e6e;border-right:1px solid #7a7a7a"></div>
<div class="a" style="left:538.5px;top:153.9px;width:4px;height:0.7px;background:#6a6a6a"></div><div class="a" style="left:541.8px;top:152.6px;width:0.7px;height:1.6px;background:#6a6a6a"></div>
<div class="t mono" style="left:513.6px;top:152.0px;font-size:6px;font-weight:normal;color:#989898;transform:scaleX(0.8);transform-origin:0 0;">none</div>
<div class="a" style="left:547px;top:148.5px;width:56px;height:10px;background:linear-gradient(#e3e3e3,#d9d9d9);border-bottom:1px solid #6e6e6e;border-right:1px solid #7a7a7a"></div>
<div class="a" style="left:595px;top:153.9px;width:4px;height:0.7px;background:#6a6a6a"></div><div class="a" style="left:598.3px;top:152.6px;width:0.7px;height:1.6px;background:#6a6a6a"></div>
<div class="t mono" style="left:565px;top:152.0px;font-size:6px;font-weight:normal;color:#989898;transform:scaleX(0.8);transform-origin:0 0;">OFF</div>
<div class="a" style="left:604px;top:148.5px;width:43.39999999999998px;height:10px;background:linear-gradient(#e3e3e3,#d9d9d9);border-bottom:1px solid #6e6e6e;border-right:1px solid #7a7a7a"></div>
<div class="a" style="left:639.4px;top:153.9px;width:4px;height:0.7px;background:#6a6a6a"></div><div class="a" style="left:642.6999999999999px;top:152.6px;width:0.7px;height:1.6px;background:#6a6a6a"></div>
<div class="t mono" style="left:607px;top:152.0px;font-size:6px;font-weight:normal;color:#989898;transform:scaleX(0.8);transform-origin:0 0;">magnitude</div>
<div class="a" style="left:649.3px;top:148.5px;width:49.30000000000007px;height:10px;background:linear-gradient(#e3e3e3,#d9d9d9);border-bottom:1px solid #6e6e6e;border-right:1px solid #7a7a7a"></div>
<div class="a" style="left:690.6px;top:153.9px;width:4px;height:0.7px;background:#6a6a6a"></div><div class="a" style="left:693.9px;top:152.6px;width:0.7px;height:1.6px;background:#6a6a6a"></div>
<div class="t mono" style="left:651px;top:152.0px;font-size:6px;font-weight:normal;color:#989898;transform:scaleX(0.8);transform-origin:0 0;">dim 1</div>
<div class="a" style="left:447px;top:163.5px;width:62.5px;height:10px;background:linear-gradient(#e3e3e3,#d9d9d9);border-bottom:1px solid #6e6e6e;border-right:1px solid #7a7a7a"></div>
<div class="a" style="left:501.5px;top:168.9px;width:4px;height:0.7px;background:#6a6a6a"></div><div class="a" style="left:504.8px;top:167.6px;width:0.7px;height:1.6px;background:#6a6a6a"></div>
<div class="t mono" style="left:469px;top:167.0px;font-size:6px;font-weight:bold;color:#1e1e1e;transform:scaleX(0.8);transform-origin:0 0;">OFF</div>
<div class="a" style="left:510px;top:163.5px;width:36.5px;height:10px;background:linear-gradient(#e3e3e3,#d9d9d9);border-bottom:1px solid #6e6e6e;border-right:1px solid #7a7a7a"></div>
<div class="a" style="left:538.5px;top:168.9px;width:4px;height:0.7px;background:#6a6a6a"></div><div class="a" style="left:541.8px;top:167.6px;width:0.7px;height:1.6px;background:#6a6a6a"></div>
<div class="t mono" style="left:513.6px;top:167.0px;font-size:6px;font-weight:normal;color:#989898;transform:scaleX(0.8);transform-origin:0 0;">none</div>
<div class="a" style="left:547px;top:163.5px;width:56px;height:10px;background:linear-gradient(#e3e3e3,#d9d9d9);border-bottom:1px solid #6e6e6e;border-right:1px solid #7a7a7a"></div>
<div class="a" style="left:595px;top:168.9px;width:4px;height:0.7px;background:#6a6a6a"></div><div class="a" style="left:598.3px;top:167.6px;width:0.7px;height:1.6px;background:#6a6a6a"></div>
<div class="t mono" style="left:565px;top:167.0px;font-size:6px;font-weight:normal;color:#989898;transform:scaleX(0.8);transform-origin:0 0;">OFF</div>
<div class="a" style="left:604px;top:163.5px;width:43.39999999999998px;height:10px;background:linear-gradient(#e3e3e3,#d9d9d9);border-bottom:1px solid #6e6e6e;border-right:1px solid #7a7a7a"></div>
<div class="a" style="left:639.4px;top:168.9px;width:4px;height:0.7px;background:#6a6a6a"></div><div class="a" style="left:642.6999999999999px;top:167.6px;width:0.7px;height:1.6px;background:#6a6a6a"></div>
<div class="t mono" style="left:607px;top:167.0px;font-size:6px;font-weight:normal;color:#989898;transform:scaleX(0.8);transform-origin:0 0;">magnitude</div>
<div class="a" style="left:649.3px;top:163.5px;width:49.30000000000007px;height:10px;background:linear-gradient(#e3e3e3,#d9d9d9);border-bottom:1px solid #6e6e6e;border-right:1px solid #7a7a7a"></div>
<div class="a" style="left:690.6px;top:168.9px;width:4px;height:0.7px;background:#6a6a6a"></div><div class="a" style="left:693.9px;top:167.6px;width:0.7px;height:1.6px;background:#6a6a6a"></div>
<div class="t mono" style="left:651px;top:167.0px;font-size:6px;font-weight:normal;color:#989898;transform:scaleX(0.8);transform-origin:0 0;">dim 1</div>
<div class="a" style="left:447px;top:178.5px;width:62.5px;height:10px;background:linear-gradient(#e3e3e3,#d9d9d9);border-bottom:1px solid #6e6e6e;border-right:1px solid #7a7a7a"></div>
<div class="a" style="left:501.5px;top:183.9px;width:4px;height:0.7px;background:#6a6a6a"></div><div class="a" style="left:504.8px;top:182.6px;width:0.7px;height:1.6px;background:#6a6a6a"></div>
<div class="t mono" style="left:469px;top:182.0px;font-size:6px;font-weight:bold;color:#1e1e1e;transform:scaleX(0.8);transform-origin:0 0;">OFF</div>
<div class="a" style="left:510px;top:178.5px;width:36.5px;height:10px;background:linear-gradient(#e3e3e3,#d9d9d9);border-bottom:1px solid #6e6e6e;border-right:1px solid #7a7a7a"></div>
<div class="a" style="left:538.5px;top:183.9px;width:4px;height:0.7px;background:#6a6a6a"></div><div class="a" style="left:541.8px;top:182.6px;width:0.7px;height:1.6px;background:#6a6a6a"></div>
<div class="t mono" style="left:513.6px;top:182.0px;font-size:6px;font-weight:normal;color:#989898;transform:scaleX(0.8);transform-origin:0 0;">none</div>
<div class="a" style="left:547px;top:178.5px;width:56px;height:10px;background:linear-gradient(#e3e3e3,#d9d9d9);border-bottom:1px solid #6e6e6e;border-right:1px solid #7a7a7a"></div>
<div class="a" style="left:595px;top:183.9px;width:4px;height:0.7px;background:#6a6a6a"></div><div class="a" style="left:598.3px;top:182.6px;width:0.7px;height:1.6px;background:#6a6a6a"></div>
<div class="t mono" style="left:565px;top:182.0px;font-size:6px;font-weight:normal;color:#989898;transform:scaleX(0.8);transform-origin:0 0;">OFF</div>
<div class="a" style="left:604px;top:178.5px;width:43.39999999999998px;height:10px;background:linear-gradient(#e3e3e3,#d9d9d9);border-bottom:1px solid #6e6e6e;border-right:1px solid #7a7a7a"></div>
<div class="a" style="left:639.4px;top:183.9px;width:4px;height:0.7px;background:#6a6a6a"></div><div class="a" style="left:642.6999999999999px;top:182.6px;width:0.7px;height:1.6px;background:#6a6a6a"></div>
<div class="t mono" style="left:607px;top:182.0px;font-size:6px;font-weight:normal;color:#989898;transform:scaleX(0.8);transform-origin:0 0;">magnitude</div>
<div class="a" style="left:649.3px;top:178.5px;width:49.30000000000007px;height:10px;background:linear-gradient(#e3e3e3,#d9d9d9);border-bottom:1px solid #6e6e6e;border-right:1px solid #7a7a7a"></div>
<div class="a" style="left:690.6px;top:183.9px;width:4px;height:0.7px;background:#6a6a6a"></div><div class="a" style="left:693.9px;top:182.6px;width:0.7px;height:1.6px;background:#6a6a6a"></div>
<div class="t mono" style="left:651px;top:182.0px;font-size:6px;font-weight:normal;color:#989898;transform:scaleX(0.8);transform-origin:0 0;">dim 1</div>
<div class="a" style="left:510px;top:194px;width:176px;height:75px;background:#000;border:1px solid #8a8a8a"></div>
<div class="a" style="left:568px;top:194px;width:1px;height:75px;background:#8a8a8a"></div>
<div class="a" style="left:627px;top:194px;width:1px;height:75px;background:#8a8a8a"></div>
<div class="a" style="left:510px;top:252px;width:176px;height:1px;background:#8a8a8a"></div>
<div class="t mono" style="left:513px;top:196.5px;font-size:5.5px;color:#ddd">A123</div>
<div class="t mono" style="left:572px;top:196.5px;font-size:5.5px;color:#ddd">B123</div>
<div class="t mono" style="left:630px;top:196.5px;font-size:5.5px;color:#ddd">C123</div>
<div class="t mono" style="left:580px;top:221.5px;width:34px;text-align:center;font-size:5.5px;font-weight:normal;color:#dddddd;transform:scaleX(0.88);transform-origin:50% 0;">not enabled</div>
<div class="t mono" style="left:639px;top:221.5px;width:34px;text-align:center;font-size:5.5px;font-weight:normal;color:#dddddd;transform:scaleX(0.88);transform-origin:50% 0;">not enabled</div>
<div class="a" style="left:515px;top:204px;width:11px;height:12px;background:linear-gradient(90deg,#1a0020,#c010f0)"></div>
<div class="a" style="left:553px;top:204px;width:12px;height:12px;background:linear-gradient(90deg,#1a0020,#c010f0)"></div>
<div class="a" style="left:529px;top:209.5px;width:1px;height:1px;background:#ccc"></div><div class="a" style="left:548px;top:209.5px;width:1.5px;height:1px;background:#ccc"></div>
<svg class="a" style="left:0;top:0" width="700" height="438"><polyline points="510.5,255 513,256.5 516,257 518,256.5 520,258.5 523,258 526,258.2 528,257.4 530,257.8 533,259 536,259.5 538,259 540,260.2 543,260.8 545,260.5 547,262 549,264 551,266.5 553,267 555,266.4 557,267.2 560,266.6 562,267.3 564,266.5 566,267.2 568,266.8" fill="none" stroke="#8a18c8" stroke-width="0.8"/></svg>
<div class="a" style="left:443px;top:272px;width:257px;height:1px;background:#b0b0ae"></div><div class="a" style="left:443px;top:273px;width:257px;height:1px;background:#f0f0f0"></div>
<div class="a" style="left:591px;top:275px;width:14px;height:10px;background:#e4e4e2;border-top:1px solid #fff;border-left:1px solid #fff;border-bottom:1px solid #666;border-right:1px solid #666"></div>
<div class="t mono" style="left:593.8px;top:277px;font-size:6px;font-weight:bold;color:#1a1a1a;transform:scaleX(0.8);transform-origin:0 0;">OK</div>
<div class="a" style="left:442.5px;top:287.5px;width:65px;height:11.5px;background:linear-gradient(#f0f0ee,#dededc);border-radius:3px 3px 0 0"></div>
<div class="a" style="left:447.5px;top:292.5px;width:2.4px;height:2.4px;border-radius:50%;background:#fff"></div>
<div class="a" style="left:456px;top:288px;width:32px;height:10px;overflow:hidden;-webkit-mask-image:linear-gradient(90deg,#000 75%,transparent)"><div class="t" style="left:0;top:1.8px;font-size:7.0px;font-weight:normal;color:#3a3a3a;-webkit-text-stroke:0.25px #3a3a3a">primary Hz</div></div>
<svg class="a" style="left:0;top:0" width="700" height="438"><circle cx="491.6" cy="292.8" r="3.2" fill="#ececea" stroke="#cfcfcd" stroke-width="0.7"/><path d="M490.1 292.0L491.6 293.6L493.1 292.0" stroke="#707070" stroke-width="0.8" fill="none"/><circle cx="501.0" cy="292.8" r="3.2" fill="#ececea" stroke="#cfcfcd" stroke-width="0.7"/><path d="M499.8 291.6L502.2 294.0M502.2 291.6L499.8 294.0" stroke="#707070" stroke-width="0.8" fill="none"/></svg>
<div class="a" style="left:442.5px;top:299px;width:65px;height:9px;background:#000"></div>
<div class="t mono" style="left:460.6px;top:299.6px;font-size:8px;font-weight:normal;color:#9a14e0;transform:scaleX(0.85);transform-origin:0 0;-webkit-text-stroke:0.1px #9a14e0">22.2484 Hz</div>
<div class="a" style="left:512.2px;top:287.5px;width:65px;height:11.5px;background:linear-gradient(#f0f0ee,#dededc);border-radius:3px 3px 0 0"></div>
<div class="a" style="left:517.2px;top:292.5px;width:2.4px;height:2.4px;border-radius:50%;background:#fff"></div>
<div class="a" style="left:527.4px;top:288px;width:30px;height:10px;overflow:hidden;-webkit-mask-image:linear-gradient(90deg,#000 75%,transparent)"><div class="t" style="left:0;top:1.8px;font-size:6.85px;font-weight:normal;color:#a8a8a8;">delta Hz</div></div>
<svg class="a" style="left:0;top:0" width="700" height="438"><circle cx="561.3000000000001" cy="292.8" r="3.2" fill="#ececea" stroke="#cfcfcd" stroke-width="0.7"/><path d="M559.8000000000001 292.0L561.3000000000001 293.6L562.8000000000001 292.0" stroke="#707070" stroke-width="0.8" fill="none"/><circle cx="570.7" cy="292.8" r="3.2" fill="#ececea" stroke="#cfcfcd" stroke-width="0.7"/><path d="M569.5 291.6L571.9000000000001 294.0M571.9000000000001 291.6L569.5 294.0" stroke="#707070" stroke-width="0.8" fill="none"/></svg>
<div class="a" style="left:512.2px;top:299px;width:65px;height:9px;background:#000"></div>
<div class="t mono" style="left:530.3000000000001px;top:299.6px;font-size:8px;font-weight:normal;color:#9a14e0;transform:scaleX(0.85);transform-origin:0 0;-webkit-text-stroke:0.1px #9a14e0">44.1850 Hz</div>
<div class="a" style="left:579.5px;top:287.5px;width:65px;height:11.5px;background:linear-gradient(#f0f0ee,#dededc);border-radius:3px 3px 0 0"></div>
<div class="a" style="left:584.5px;top:292.5px;width:2.4px;height:2.4px;border-radius:50%;background:#fff"></div>
<div class="a" style="left:592.5px;top:288px;width:30px;height:10px;overflow:hidden;-webkit-mask-image:linear-gradient(90deg,#000 75%,transparent)"><div class="t" style="left:0;top:1.8px;font-size:6.85px;font-weight:normal;color:#a8a8a8;">secondary Hz</div></div>
<svg class="a" style="left:0;top:0" width="700" height="438"><circle cx="628.6" cy="292.8" r="3.2" fill="#ececea" stroke="#cfcfcd" stroke-width="0.7"/><path d="M627.1 292.0L628.6 293.6L630.1 292.0" stroke="#707070" stroke-width="0.8" fill="none"/><circle cx="638.0" cy="292.8" r="3.2" fill="#ececea" stroke="#cfcfcd" stroke-width="0.7"/><path d="M636.8 291.6L639.2 294.0M639.2 291.6L636.8 294.0" stroke="#707070" stroke-width="0.8" fill="none"/></svg>
<div class="a" style="left:579.5px;top:299px;width:65px;height:9px;background:#000"></div>
<div class="t mono" style="left:597.6px;top:299.6px;font-size:8px;font-weight:normal;color:#9a14e0;transform:scaleX(0.85);transform-origin:0 0;-webkit-text-stroke:0.1px #9a14e0">66.4334 Hz</div>
<svg class="a" style="left:493.5px;top:265.5px" width="8" height="10" viewBox="0 0 8 10"><path d="M0.5 0.5 L0.5 7.8 L2.3 6.2 L3.6 9 L4.8 8.4 L3.6 5.8 L6 5.6 Z" fill="#f4f4f4" stroke="#202020" stroke-width="0.7" stroke-linejoin="round"/></svg></body></html>
